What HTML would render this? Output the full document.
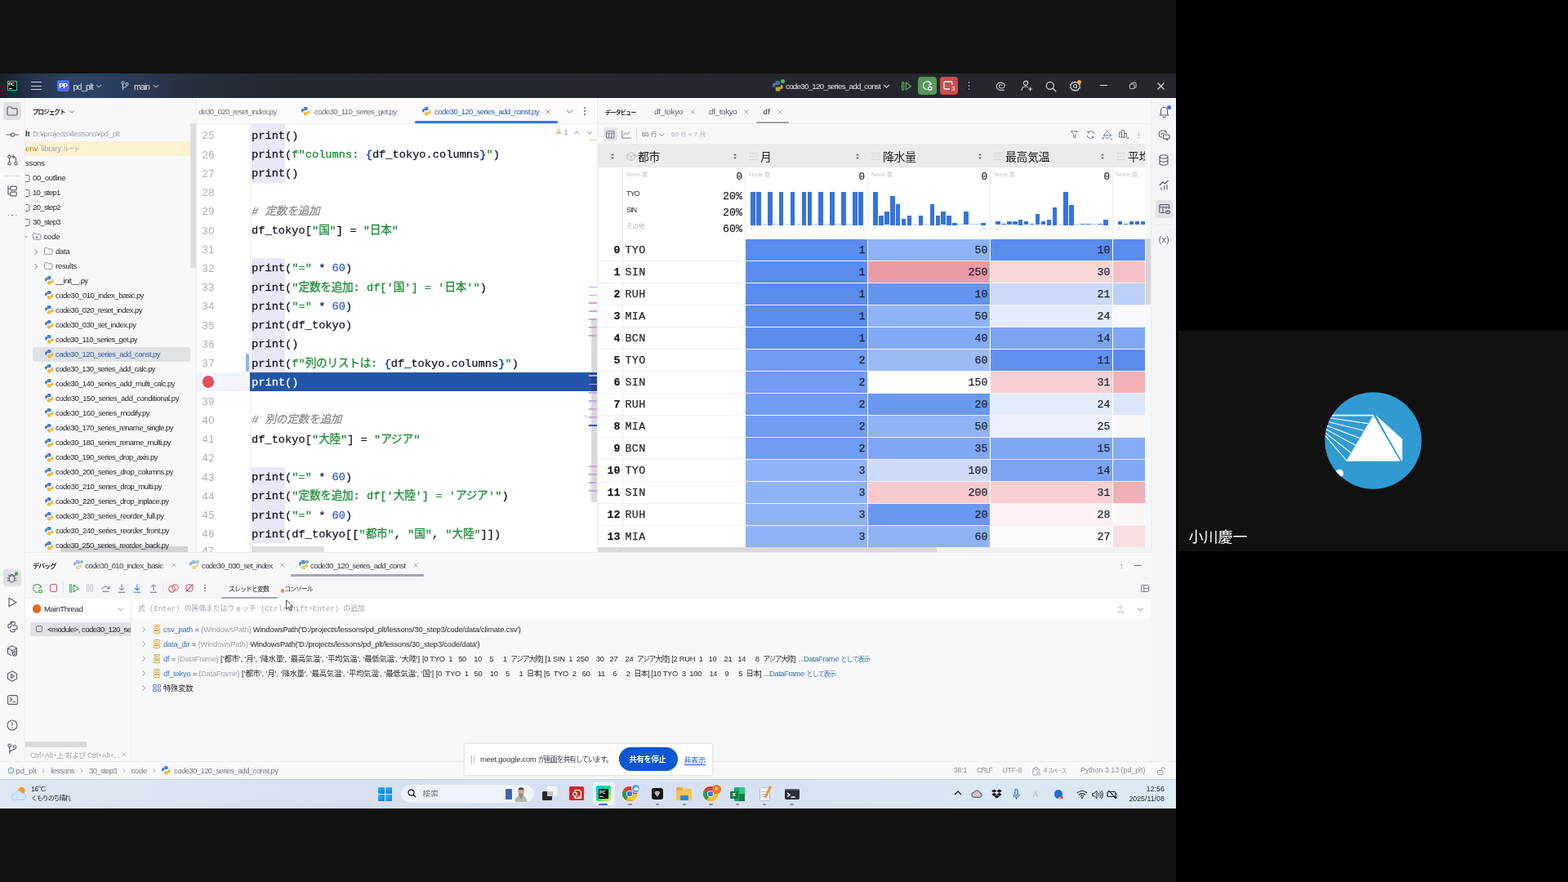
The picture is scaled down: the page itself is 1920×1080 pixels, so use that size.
<!DOCTYPE html>
<html><head><meta charset="utf-8"><title>PyCharm - Meet</title>
<style>
html,body{margin:0;padding:0;background:#000}
body{width:1920px;height:1080px;overflow:hidden;position:relative;font-family:"Liberation Sans","Noto Sans CJK JP",sans-serif}
body div,body span.t,body svg{position:absolute}
.t{white-space:pre;display:block}
.s{font-family:"Liberation Sans","Noto Sans CJK JP",sans-serif}
.m{font-family:"Liberation Mono","Noto Sans CJK JP",monospace}
.r{font-family:"Liberation Serif","Noto Serif CJK SC",serif}
i.j{display:inline-block;white-space:nowrap;font-style:inherit;vertical-align:baseline;letter-spacing:0}
svg{overflow:visible}
</style></head><body>
<div id="R" style="left:0;top:0;width:1920px;height:1080px;will-change:transform">
<div style="left:0px;top:0px;width:1440px;height:1080px;background:#111;"></div>
<div style="left:1443px;top:405px;width:477px;height:270px;background:#111;"></div>
<div style="left:0px;top:120px;width:1440px;height:834px;background:#f7f8fa;"></div>
<div style="left:0px;top:90px;width:1440px;height:30px;background:linear-gradient(90deg,#1b222d 0px,#243450 40px,#2d4266 90px,#2b3d5e 150px,#27303f 230px,#24282f 330px,#24272c 1440px);"></div>
<div style="left:8.5px;top:98.5px;width:12.5px;height:12.5px;background:#0b0b0b;border:1px solid #21d789;box-sizing:border-box;"></div>
<span class="t s b" style="top:100.2px;font-size:5.5px;line-height:6px;color:#fff;left:10.2px;font-weight:700;">PC</span>
<div style="left:10.5px;top:108px;width:4px;height:1px;background:#fff;"></div>
<div style="left:38px;top:100px;width:12.5px;height:1.3px;background:#ced0d6;"></div>
<div style="left:38px;top:104.5px;width:12.5px;height:1.3px;background:#ced0d6;"></div>
<div style="left:38px;top:109px;width:12.5px;height:1.3px;background:#ced0d6;"></div>
<div style="left:70px;top:97.5px;width:14.5px;height:14.5px;background:linear-gradient(135deg,#3f7cf4,#6a5be6);border-radius:3px;"></div>
<span class="t s b" style="top:99.5px;font-size:8.5px;line-height:11px;color:#fff;left:72.2px;letter-spacing:-0.52px;font-weight:700;">PP</span>
<span class="t s" style="top:98.5px;font-size:10.5px;line-height:14px;color:#dfe1e5;left:89.5px;letter-spacing:-0.685px;">pd_plt</span>
<svg style="left:117px;top:102.5px;" width="8" height="5" viewBox="0 0 8 5"><path d="M1 1l3 3 3-3" fill="none" stroke="#9da0a8" stroke-width="1.100"/></svg>
<svg style="left:147.5px;top:98.5px;" width="10" height="12" viewBox="0 0 10 12"><g fill="none" stroke="#ced0d6" stroke-width="1"><circle cx="2.500" cy="2.500" r="1.600"/><circle cx="7.500" cy="4" r="1.600"/><path d="M2.500 4.100V11.500M7.500 5.600c0 2.500-5 1.500-5 4"/></g></svg>
<span class="t s" style="top:98.5px;font-size:10.5px;line-height:14px;color:#dfe1e5;left:164px;letter-spacing:-0.94px;">main</span>
<svg style="left:186.5px;top:102.5px;" width="8" height="5" viewBox="0 0 8 5"><path d="M1 1l3 3 3-3" fill="none" stroke="#9da0a8" stroke-width="1.100"/></svg>
<svg style="left:946.2px;top:99.2px;opacity:0.9" width="12.69" height="12.69" viewBox="2 1 12 14" preserveAspectRatio="none"><path d="M7.9 1C5 1 5.200 2.200 5.200 2.200v1.400h2.800v.4H3.900S2 3.700 2 6.700s1.600 2.900 1.600 2.900h1V8.200s0-1.600 1.600-1.600h2.800s1.500 0 1.500-1.500V2.600S10.800 1 7.900 1z" fill="#4b86bd"/><path d="M8.100 15c2.900 0 2.700-1.200 2.700-1.200v-1.400H8v-.4h4.100s1.900.2 1.900-2.800-1.600-2.900-1.600-2.900h-1v1.400s0 1.600-1.600 1.600H7s-1.500 0-1.500 1.500v2.500S5.200 15 8.100 15z" fill="#d9ad3a"/></svg>
<div style="left:955.5px;top:96.5px;width:5px;height:5px;background:#5fb865;border-radius:50%;"></div>
<span class="t s" style="top:99.0px;font-size:9.8px;line-height:13px;color:#dfe1e5;left:962px;letter-spacing:-0.749px;">code30_120_series_add_const</span>
<svg style="left:1081px;top:102.5px;" width="9" height="5" viewBox="0 0 9 5"><path d="M1 .8l3.500 3.400L8 .8" fill="none" stroke="#ced0d6" stroke-width="1.100"/></svg>
<svg style="left:1104px;top:99.5px;" width="12" height="11" viewBox="0 0 12 11"><g fill="none" stroke="#5fad65" stroke-width="1.200"><rect x=".6" y=".8" width="2.200" height="9.400" rx=".8"/><path d="M5.300 1.100v8.800l6-4.400z" stroke-linejoin="round"/></g></svg>
<div style="left:1124px;top:94px;width:22.5px;height:22px;background:#57965c;border-radius:4px;"></div>
<svg style="left:1128.5px;top:98px;" width="14" height="14" viewBox="0 0 14 14"><g fill="none" stroke="#fff" stroke-width="1.200"><path d="M6.500 11.500A4.800 4.800 0 1 1 11 5.300"/><path d="M8.500 2.300l2.700 2.900-3.300 1"/><circle cx="9.800" cy="10.300" r="2"/><path d="M7 9l1 .6M12.600 9l-1 .6M7 12l1-.6M12.600 12l-1-.6M9.800 8.300V7.300"/></g></svg>
<div style="left:1150.5px;top:94px;width:22px;height:22px;background:#c94f4f;border-radius:4px;"></div>
<svg style="left:1154px;top:98px;" width="16" height="14" viewBox="0 0 16 14"><path d="M9 11H3.500A1.500 1.500 0 0 1 2 9.500v-6A1.500 1.500 0 0 1 3.500 2h7A1.500 1.500 0 0 1 12 3.500V6" fill="none" stroke="#fff" stroke-width="1.300"/></svg>
<span class="t s" style="top:103.5px;font-size:8px;line-height:10px;color:#fff;left:1165px;">3</span>
<div style="left:1185.6px;top:100.1px;width:1.8px;height:1.8px;background:#ced0d6;border-radius:50%;"></div>
<div style="left:1185.6px;top:104.1px;width:1.8px;height:1.8px;background:#ced0d6;border-radius:50%;"></div>
<div style="left:1185.6px;top:108.1px;width:1.8px;height:1.8px;background:#ced0d6;border-radius:50%;"></div>
<svg style="left:1219px;top:98.5px;" width="14" height="13" viewBox="0 0 14 13"><path d="M8.1 5.6 8.0 5.4 7.9 5.2 7.7 5.0 7.4 4.9 7.1 4.7 6.8 4.7 6.5 4.7 6.1 4.7 5.8 4.8 5.4 4.9 5.1 5.1 4.9 5.4 4.6 5.7 4.5 6.0 4.4 6.4 4.4 6.8 4.4 7.1 4.6 7.5 4.9 7.9 5.2 8.2 5.6 8.5 6.1 8.8 6.6 8.9 7.2 9.0 7.8 9.0 8.4 8.9 9.0 8.7 9.6 8.4 10.1 8.1 10.5 7.7 10.8 7.2 11.1 6.6 11.2 6.0 11.2 5.4 11.0 4.8 10.7 4.2 10.3 3.7 9.8 3.2 9.2 2.8 8.5 2.5 7.7 2.2 6.8 2.1 6.0 2.1 5.1 2.3 4.3 2.6 3.5 2.9 2.8 3.4 2.2 4.0 1.7 4.7 1.4 5.5 1.3 6.3 1.3 7.1 1.5 7.9 1.9 8.7 2.4 9.4 3.1 10.1 3.9 10.7 4.9 11.1 5.9 11.4 7.0 11.5 L10.2 11.4" fill="none" stroke="#ced0d6" stroke-width="1.100" stroke-linecap="round" stroke-linejoin="round"/></svg>
<svg style="left:1250px;top:98px;" width="15" height="14" viewBox="0 0 15 14"><g fill="none" stroke="#ced0d6" stroke-width="1.200"><circle cx="6" cy="3.800" r="2.600"/><path d="M1 13c0-3 2-5 5-5 1.200 0 2 .3 2.800.8M11.500 8.500v5M9 11h5"/></g></svg>
<svg style="left:1279.5px;top:98.5px;" width="14" height="14" viewBox="0 0 14 14"><g fill="none" stroke="#ced0d6" stroke-width="1.300"><circle cx="5.800" cy="5.800" r="4.500"/><path d="M9.200 9.200l4 4"/></g></svg>
<svg style="left:1309.5px;top:97.5px;" width="14" height="14" viewBox="0 0 14 14"><g fill="none" stroke="#ced0d6" stroke-width="1.200"><circle cx="6.500" cy="7.500" r="2"/><path d="M6.500 2l1.500 1.300 2-.3.700 1.900 1.800 1-.7 1.900.7 1.900-1.800 1-.7 1.900-2-.3L6.500 13.500 5 12.200l-2 .3-.7-1.900-1.800-1 .7-1.900-.7-1.900 1.800-1L3 2.900l2 .4z" stroke-linejoin="round"/></g></svg>
<div style="left:1318.8px;top:97.7px;width:5px;height:5px;background:#f5a623;border-radius:50%;"></div>
<div style="left:1347px;top:103.8px;width:8.5px;height:1px;background:#dfe1e5;"></div>
<svg style="left:1382.5px;top:101px;" width="8.5" height="8.5" viewBox="0 0 10 10"><g fill="none" stroke="#dfe1e5" stroke-width="1"><rect x=".5" y="2.500" width="6.500" height="6.500" rx="1"/><path d="M2.500 2.300V1.500a1 1 0 0 1 1-1H8.500a1 1 0 0 1 1 1V6.500a1 1 0 0 1-1 1H7.200"/></g></svg>
<svg style="left:1417px;top:100.5px;" width="9" height="9" viewBox="0 0 9 9"><path d="M.5.500l8 8M8.500.5l-8 8" stroke="#dfe1e5" stroke-width="1.100"/></svg>
<div style="left:30px;top:120px;width:1px;height:812px;background:#ebecf0;"></div>
<div style="left:4px;top:125px;width:22px;height:22px;background:#dfe1e5;border-radius:4px;"></div>
<svg style="left:8px;top:129.5px;" width="14" height="12" viewBox="0 0 14 12"><path d="M1 2.500A1.500 1.500 0 0 1 2.500 1h3l1.500 1.800h4.500A1.500 1.500 0 0 1 13 4.300v5.200A1.500 1.500 0 0 1 11.500 11h-9A1.500 1.500 0 0 1 1 9.500z" fill="none" stroke="#5a5d6b" stroke-width="1.200"/></svg>
<svg style="left:7.5px;top:162px;" width="15" height="6" viewBox="0 0 15 6"><g fill="none" stroke="#5a5d6b" stroke-width="1.100"><circle cx="7.500" cy="3" r="2.200"/><path d="M0 3h5.300M9.700 3H15"/></g></svg>
<svg style="left:8.5px;top:189px;" width="13" height="14" viewBox="0 0 13 14"><g fill="none" stroke="#5a5d6b" stroke-width="1.100"><circle cx="2.500" cy="2.800" r="1.700"/><circle cx="2.500" cy="11.200" r="1.700"/><circle cx="10.500" cy="11.200" r="1.700"/><path d="M2.500 4.500v5M10.500 9.500V5.500A2.500 2.500 0 0 0 8 3H6.500M8 1L6 3l2 2"/></g></svg>
<div style="left:6px;top:214.5px;width:18px;height:1px;background:#dfe1e5;"></div>
<svg style="left:9px;top:227px;" width="12" height="14" viewBox="0 0 12 14"><g fill="none" stroke="#5a5d6b" stroke-width="1.200"><path d="M1 .5v10.500h2.500M1 4h2.500"/><rect x="3.800" y="1.200" width="7.400" height="4.600" rx="1"/><rect x="3.800" y="8.200" width="7.400" height="4.600" rx="1"/></g></svg>
<div style="left:9.5px;top:262.5px;width:1.8px;height:1.8px;background:#5a5d6b;border-radius:50%;"></div>
<div style="left:14px;top:262.5px;width:1.8px;height:1.8px;background:#5a5d6b;border-radius:50%;"></div>
<div style="left:18.5px;top:262.5px;width:1.8px;height:1.8px;background:#5a5d6b;border-radius:50%;"></div>
<span class="t s b" style="top:129.5px;font-size:9.8px;line-height:13px;color:#27282e;left:40px;font-weight:700;"><i class=j style="width:39.4px;font-size:7.6px;letter-spacing:-1px">プロジェクト</i></span>
<svg style="left:84px;top:134px;" width="8" height="5" viewBox="0 0 8 5"><path d="M1 1l3 3 3-3" fill="none" stroke="#818594" stroke-width="1"/></svg>
<div style="left:31px;top:173px;width:202px;height:17.5px;background:#fdf2d0;"></div>
<span class="t s b" style="top:158.0px;font-size:9.5px;line-height:12px;color:#27282e;left:31px;letter-spacing:-0.152px;font-weight:700;">lt</span>
<span class="t s" style="top:158.0px;font-size:9.5px;line-height:12px;color:#a1a4ad;left:40px;letter-spacing:-0.393px;">D:¥projects¥lessons¥pd_plt</span>
<span class="t s" style="top:176.0px;font-size:9.5px;line-height:12px;color:#b8862b;left:31px;letter-spacing:0.061px;">env</span>
<span class="t s" style="top:176.0px;font-size:9.5px;line-height:12px;color:#a1a4ad;left:50.5px;letter-spacing:-0.244px;">library <i class=j style="width:19.95px;font-size:7.6px;letter-spacing:-1px">ルート</i></span>
<span class="t s" style="top:194.0px;font-size:9.5px;line-height:12px;color:#27282e;left:31px;letter-spacing:-0.263px;">ssons</span>
<svg style="left:31px;top:213.5px;" width="6" height="9" viewBox="0 0 6 9"><path d="M0 .5h3.500A1.500 1.500 0 0 1 5 2v5A1.500 1.500 0 0 1 3.500 8.500H0" fill="none" stroke="#6c707e" stroke-width="1"/></svg>
<span class="t s" style="top:212.0px;font-size:9.5px;line-height:12px;color:#27282e;left:40px;letter-spacing:-0.335px;">00_outline</span>
<svg style="left:31px;top:231.5px;" width="6" height="9" viewBox="0 0 6 9"><path d="M0 .5h3.500A1.500 1.500 0 0 1 5 2v5A1.500 1.500 0 0 1 3.500 8.500H0" fill="none" stroke="#6c707e" stroke-width="1"/></svg>
<span class="t s" style="top:230.0px;font-size:9.5px;line-height:12px;color:#27282e;left:40px;letter-spacing:-0.699px;">10_step1</span>
<svg style="left:31px;top:249.5px;" width="6" height="9" viewBox="0 0 6 9"><path d="M0 .5h3.500A1.500 1.500 0 0 1 5 2v5A1.500 1.500 0 0 1 3.500 8.500H0" fill="none" stroke="#6c707e" stroke-width="1"/></svg>
<span class="t s" style="top:248.0px;font-size:9.5px;line-height:12px;color:#27282e;left:40px;letter-spacing:-0.636px;">20_step2</span>
<svg style="left:31px;top:267.5px;" width="6" height="9" viewBox="0 0 6 9"><path d="M0 .5h3.500A1.500 1.500 0 0 1 5 2v5A1.500 1.500 0 0 1 3.500 8.500H0" fill="none" stroke="#6c707e" stroke-width="1"/></svg>
<span class="t s" style="top:266.0px;font-size:9.5px;line-height:12px;color:#27282e;left:40px;letter-spacing:-0.636px;">30_step3</span>
<svg style="left:31px;top:288px;" width="4" height="4" viewBox="0 0 4 4"><path d="M0 .5l2 2.500" stroke="#6c707e" fill="none"/></svg>
<svg style="left:40.3px;top:285.4px;" width="10.5" height="8.8" viewBox="0 0 12 10"><path d="M.6 1.800A1.200 1.200 0 0 1 1.800.6h2.700l1.200 1.500h4.500A1.200 1.200 0 0 1 11.400 3.300v5A1.200 1.200 0 0 1 10.200 9.500H1.800A1.200 1.200 0 0 1 .6 8.300z" fill="none" stroke="#858997" stroke-width="1"/></svg>
<div style="left:43.8px;top:289.2px;width:2.5px;height:2.5px;background:none;border:0.8px solid #858997;border-radius:50%;box-sizing:border-box;"></div>
<span class="t s" style="top:284.0px;font-size:9.5px;line-height:12px;color:#27282e;left:53.5px;letter-spacing:-0.15px;">code</span>
<svg style="left:42px;top:304.5px;" width="4.5" height="7" viewBox="0 0 4.500 7"><path d="M.7.500l3 3-3 3" stroke="#6c707e" fill="none" stroke-width="1"/></svg>
<svg style="left:54.3px;top:303.4px;" width="10.5" height="8.8" viewBox="0 0 12 10"><path d="M.6 1.800A1.200 1.200 0 0 1 1.800.6h2.700l1.200 1.500h4.500A1.200 1.200 0 0 1 11.400 3.300v5A1.200 1.200 0 0 1 10.200 9.500H1.800A1.200 1.200 0 0 1 .6 8.300z" fill="none" stroke="#858997" stroke-width="1"/></svg>
<span class="t s" style="top:302.0px;font-size:9.5px;line-height:12px;color:#27282e;left:68px;letter-spacing:-0.247px;">data</span>
<svg style="left:42px;top:322.5px;" width="4.5" height="7" viewBox="0 0 4.500 7"><path d="M.7.500l3 3-3 3" stroke="#6c707e" fill="none" stroke-width="1"/></svg>
<svg style="left:54.3px;top:321.4px;" width="10.5" height="8.8" viewBox="0 0 12 10"><path d="M.6 1.800A1.200 1.200 0 0 1 1.800.6h2.700l1.200 1.500h4.500A1.200 1.200 0 0 1 11.400 3.300v5A1.200 1.200 0 0 1 10.200 9.500H1.800A1.200 1.200 0 0 1 .6 8.300z" fill="none" stroke="#858997" stroke-width="1"/></svg>
<span class="t s" style="top:320.0px;font-size:9.5px;line-height:12px;color:#27282e;left:68px;letter-spacing:-0.283px;">results</span>
<div style="left:40px;top:425px;width:192.5px;height:18px;background:#dfe1e5;border-radius:3px;"></div>
<svg style="left:55.0px;top:338.4px;opacity:1" width="10.5" height="10.5" viewBox="2 1 12 14" preserveAspectRatio="none"><path d="M7.9 1C5 1 5.200 2.200 5.200 2.200v1.400h2.800v.4H3.900S2 3.700 2 6.700s1.600 2.900 1.600 2.900h1V8.200s0-1.600 1.600-1.600h2.800s1.500 0 1.500-1.500V2.600S10.800 1 7.900 1z" fill="#3b7bd0"/><path d="M8.100 15c2.900 0 2.700-1.200 2.700-1.200v-1.400H8v-.4h4.100s1.900.2 1.900-2.800-1.600-2.900-1.600-2.900h-1v1.400s0 1.600-1.600 1.600H7s-1.500 0-1.500 1.500v2.500S5.200 15 8.100 15z" fill="#f4b830"/></svg>
<span class="t s" style="top:338.0px;font-size:9.5px;line-height:12px;color:#27282e;left:68px;letter-spacing:-0.586px;">__init__.py</span>
<svg style="left:55.0px;top:356.4px;opacity:1" width="10.5" height="10.5" viewBox="2 1 12 14" preserveAspectRatio="none"><path d="M7.9 1C5 1 5.200 2.200 5.200 2.200v1.400h2.800v.4H3.900S2 3.700 2 6.700s1.600 2.900 1.600 2.900h1V8.200s0-1.600 1.600-1.600h2.800s1.500 0 1.500-1.500V2.600S10.800 1 7.900 1z" fill="#3b7bd0"/><path d="M8.100 15c2.900 0 2.700-1.200 2.700-1.200v-1.400H8v-.4h4.100s1.900.2 1.900-2.800-1.600-2.900-1.600-2.900h-1v1.400s0 1.600-1.600 1.600H7s-1.500 0-1.500 1.500v2.500S5.200 15 8.100 15z" fill="#f4b830"/></svg>
<span class="t s" style="top:356.0px;font-size:9.5px;line-height:12px;color:#27282e;left:68px;letter-spacing:-0.497px;">code30_010_index_basic.py</span>
<svg style="left:55.0px;top:374.4px;opacity:1" width="10.5" height="10.5" viewBox="2 1 12 14" preserveAspectRatio="none"><path d="M7.9 1C5 1 5.200 2.200 5.200 2.200v1.400h2.800v.4H3.900S2 3.700 2 6.700s1.600 2.900 1.600 2.900h1V8.200s0-1.600 1.600-1.600h2.800s1.500 0 1.500-1.500V2.600S10.800 1 7.900 1z" fill="#3b7bd0"/><path d="M8.100 15c2.900 0 2.700-1.200 2.700-1.200v-1.400H8v-.4h4.100s1.900.2 1.900-2.800-1.600-2.900-1.600-2.900h-1v1.400s0 1.600-1.600 1.600H7s-1.500 0-1.500 1.500v2.500S5.200 15 8.100 15z" fill="#f4b830"/></svg>
<span class="t s" style="top:374.0px;font-size:9.5px;line-height:12px;color:#27282e;left:68px;letter-spacing:-0.535px;">code30_020_reset_index.py</span>
<svg style="left:55.0px;top:392.4px;opacity:1" width="10.5" height="10.5" viewBox="2 1 12 14" preserveAspectRatio="none"><path d="M7.9 1C5 1 5.200 2.200 5.200 2.200v1.400h2.800v.4H3.900S2 3.700 2 6.700s1.600 2.900 1.600 2.900h1V8.200s0-1.600 1.600-1.600h2.800s1.500 0 1.500-1.500V2.600S10.800 1 7.900 1z" fill="#3b7bd0"/><path d="M8.100 15c2.900 0 2.700-1.200 2.700-1.200v-1.400H8v-.4h4.100s1.900.2 1.900-2.800-1.600-2.900-1.600-2.900h-1v1.400s0 1.600-1.600 1.600H7s-1.500 0-1.500 1.500v2.500S5.200 15 8.100 15z" fill="#f4b830"/></svg>
<span class="t s" style="top:392.0px;font-size:9.5px;line-height:12px;color:#27282e;left:68px;letter-spacing:-0.54px;">code30_030_set_index.py</span>
<svg style="left:55.0px;top:410.4px;opacity:1" width="10.5" height="10.5" viewBox="2 1 12 14" preserveAspectRatio="none"><path d="M7.9 1C5 1 5.200 2.200 5.200 2.200v1.400h2.800v.4H3.900S2 3.700 2 6.700s1.600 2.900 1.600 2.900h1V8.200s0-1.600 1.600-1.600h2.800s1.500 0 1.500-1.500V2.600S10.800 1 7.900 1z" fill="#3b7bd0"/><path d="M8.100 15c2.900 0 2.700-1.200 2.700-1.200v-1.400H8v-.4h4.100s1.900.2 1.900-2.800-1.600-2.900-1.600-2.900h-1v1.400s0 1.600-1.600 1.600H7s-1.500 0-1.500 1.500v2.500S5.200 15 8.100 15z" fill="#f4b830"/></svg>
<span class="t s" style="top:410.0px;font-size:9.5px;line-height:12px;color:#27282e;left:68px;letter-spacing:-0.558px;">code30_110_series_get.py</span>
<svg style="left:55.0px;top:428.4px;opacity:1" width="10.5" height="10.5" viewBox="2 1 12 14" preserveAspectRatio="none"><path d="M7.9 1C5 1 5.200 2.200 5.200 2.200v1.400h2.800v.4H3.900S2 3.700 2 6.700s1.600 2.900 1.600 2.900h1V8.200s0-1.600 1.600-1.600h2.800s1.500 0 1.500-1.500V2.600S10.800 1 7.900 1z" fill="#3b7bd0"/><path d="M8.100 15c2.900 0 2.700-1.200 2.700-1.200v-1.400H8v-.4h4.100s1.900.2 1.900-2.800-1.600-2.900-1.600-2.900h-1v1.400s0 1.600-1.600 1.600H7s-1.500 0-1.500 1.500v2.500S5.200 15 8.100 15z" fill="#f4b830"/></svg>
<span class="t s" style="top:428.0px;font-size:9.5px;line-height:12px;color:#2f5fa8;left:68px;letter-spacing:-0.557px;">code30_120_series_add_const.py</span>
<svg style="left:55.0px;top:446.4px;opacity:1" width="10.5" height="10.5" viewBox="2 1 12 14" preserveAspectRatio="none"><path d="M7.9 1C5 1 5.200 2.200 5.200 2.200v1.400h2.800v.4H3.900S2 3.700 2 6.700s1.600 2.900 1.600 2.900h1V8.200s0-1.600 1.600-1.600h2.800s1.500 0 1.500-1.500V2.600S10.800 1 7.900 1z" fill="#3b7bd0"/><path d="M8.100 15c2.900 0 2.700-1.200 2.700-1.200v-1.400H8v-.4h4.100s1.900.2 1.900-2.800-1.600-2.900-1.600-2.900h-1v1.400s0 1.600-1.600 1.600H7s-1.500 0-1.500 1.500v2.500S5.200 15 8.100 15z" fill="#f4b830"/></svg>
<span class="t s" style="top:446.0px;font-size:9.5px;line-height:12px;color:#27282e;left:68px;letter-spacing:-0.583px;">code30_130_series_add_calc.py</span>
<svg style="left:55.0px;top:464.4px;opacity:1" width="10.5" height="10.5" viewBox="2 1 12 14" preserveAspectRatio="none"><path d="M7.9 1C5 1 5.200 2.200 5.200 2.200v1.400h2.800v.4H3.900S2 3.700 2 6.700s1.600 2.900 1.600 2.900h1V8.200s0-1.600 1.600-1.600h2.800s1.500 0 1.500-1.500V2.600S10.800 1 7.900 1z" fill="#3b7bd0"/><path d="M8.100 15c2.900 0 2.700-1.200 2.700-1.200v-1.400H8v-.4h4.100s1.900.2 1.900-2.800-1.600-2.900-1.600-2.900h-1v1.400s0 1.600-1.600 1.600H7s-1.500 0-1.500 1.500v2.500S5.200 15 8.100 15z" fill="#f4b830"/></svg>
<span class="t s" style="top:464.0px;font-size:9.5px;line-height:12px;color:#27282e;left:68px;letter-spacing:-0.521px;">code30_140_series_add_multi_calc.py</span>
<svg style="left:55.0px;top:482.4px;opacity:1" width="10.5" height="10.5" viewBox="2 1 12 14" preserveAspectRatio="none"><path d="M7.9 1C5 1 5.200 2.200 5.200 2.200v1.400h2.800v.4H3.900S2 3.700 2 6.700s1.600 2.900 1.600 2.900h1V8.200s0-1.600 1.600-1.600h2.800s1.500 0 1.500-1.500V2.600S10.800 1 7.900 1z" fill="#3b7bd0"/><path d="M8.100 15c2.900 0 2.700-1.200 2.700-1.200v-1.400H8v-.4h4.100s1.900.2 1.900-2.800-1.600-2.900-1.600-2.900h-1v1.400s0 1.600-1.600 1.600H7s-1.500 0-1.500 1.500v2.500S5.200 15 8.100 15z" fill="#f4b830"/></svg>
<span class="t s" style="top:482.0px;font-size:9.5px;line-height:12px;color:#27282e;left:68px;letter-spacing:-0.457px;">code30_150_series_add_conditional.py</span>
<svg style="left:55.0px;top:500.4px;opacity:1" width="10.5" height="10.5" viewBox="2 1 12 14" preserveAspectRatio="none"><path d="M7.9 1C5 1 5.200 2.200 5.200 2.200v1.400h2.800v.4H3.900S2 3.700 2 6.700s1.600 2.900 1.600 2.900h1V8.200s0-1.600 1.600-1.600h2.800s1.500 0 1.500-1.500V2.600S10.800 1 7.900 1z" fill="#3b7bd0"/><path d="M8.100 15c2.900 0 2.700-1.200 2.700-1.200v-1.400H8v-.4h4.100s1.900.2 1.900-2.800-1.600-2.900-1.600-2.900h-1v1.400s0 1.600-1.600 1.600H7s-1.500 0-1.500 1.500v2.500S5.200 15 8.100 15z" fill="#f4b830"/></svg>
<span class="t s" style="top:500.0px;font-size:9.5px;line-height:12px;color:#27282e;left:68px;letter-spacing:-0.487px;">code30_160_series_modify.py</span>
<svg style="left:55.0px;top:518.5px;opacity:1" width="10.5" height="10.5" viewBox="2 1 12 14" preserveAspectRatio="none"><path d="M7.9 1C5 1 5.200 2.200 5.200 2.200v1.400h2.800v.4H3.900S2 3.700 2 6.700s1.600 2.900 1.600 2.900h1V8.200s0-1.600 1.600-1.600h2.800s1.500 0 1.500-1.500V2.600S10.800 1 7.900 1z" fill="#3b7bd0"/><path d="M8.100 15c2.900 0 2.700-1.200 2.700-1.200v-1.400H8v-.4h4.100s1.900.2 1.900-2.800-1.600-2.900-1.600-2.900h-1v1.400s0 1.600-1.600 1.600H7s-1.500 0-1.500 1.500v2.500S5.200 15 8.100 15z" fill="#f4b830"/></svg>
<span class="t s" style="top:518.0px;font-size:9.5px;line-height:12px;color:#27282e;left:68px;letter-spacing:-0.565px;">code30_170_series_rename_single.py</span>
<svg style="left:55.0px;top:536.5px;opacity:1" width="10.5" height="10.5" viewBox="2 1 12 14" preserveAspectRatio="none"><path d="M7.9 1C5 1 5.200 2.200 5.200 2.200v1.400h2.800v.4H3.900S2 3.700 2 6.700s1.600 2.900 1.600 2.900h1V8.200s0-1.600 1.600-1.600h2.800s1.500 0 1.500-1.500V2.600S10.800 1 7.900 1z" fill="#3b7bd0"/><path d="M8.100 15c2.900 0 2.700-1.200 2.700-1.200v-1.400H8v-.4h4.100s1.900.2 1.900-2.800-1.600-2.900-1.600-2.900h-1v1.400s0 1.600-1.600 1.600H7s-1.500 0-1.500 1.500v2.500S5.200 15 8.100 15z" fill="#f4b830"/></svg>
<span class="t s" style="top:536.0px;font-size:9.5px;line-height:12px;color:#27282e;left:68px;letter-spacing:-0.528px;">code30_180_series_rename_multi.py</span>
<svg style="left:55.0px;top:554.5px;opacity:1" width="10.5" height="10.5" viewBox="2 1 12 14" preserveAspectRatio="none"><path d="M7.9 1C5 1 5.200 2.200 5.200 2.200v1.400h2.800v.4H3.900S2 3.700 2 6.700s1.600 2.900 1.600 2.900h1V8.200s0-1.600 1.600-1.600h2.800s1.500 0 1.500-1.500V2.600S10.800 1 7.900 1z" fill="#3b7bd0"/><path d="M8.100 15c2.900 0 2.700-1.200 2.700-1.200v-1.400H8v-.4h4.100s1.900.2 1.900-2.800-1.600-2.900-1.600-2.900h-1v1.400s0 1.600-1.600 1.600H7s-1.500 0-1.500 1.500v2.500S5.200 15 8.100 15z" fill="#f4b830"/></svg>
<span class="t s" style="top:554.0px;font-size:9.5px;line-height:12px;color:#27282e;left:68px;letter-spacing:-0.569px;">code30_190_series_drop_axis.py</span>
<svg style="left:55.0px;top:572.5px;opacity:1" width="10.5" height="10.5" viewBox="2 1 12 14" preserveAspectRatio="none"><path d="M7.9 1C5 1 5.200 2.200 5.200 2.200v1.400h2.800v.4H3.900S2 3.700 2 6.700s1.600 2.900 1.600 2.900h1V8.200s0-1.600 1.600-1.600h2.800s1.500 0 1.500-1.500V2.600S10.800 1 7.900 1z" fill="#3b7bd0"/><path d="M8.100 15c2.900 0 2.700-1.200 2.700-1.200v-1.400H8v-.4h4.100s1.900.2 1.900-2.800-1.600-2.900-1.600-2.900h-1v1.400s0 1.600-1.600 1.600H7s-1.500 0-1.500 1.500v2.500S5.200 15 8.100 15z" fill="#f4b830"/></svg>
<span class="t s" style="top:572.0px;font-size:9.5px;line-height:12px;color:#27282e;left:68px;letter-spacing:-0.502px;">code30_200_series_drop_columns.py</span>
<svg style="left:55.0px;top:590.5px;opacity:1" width="10.5" height="10.5" viewBox="2 1 12 14" preserveAspectRatio="none"><path d="M7.9 1C5 1 5.200 2.200 5.200 2.200v1.400h2.800v.4H3.900S2 3.700 2 6.700s1.600 2.900 1.600 2.900h1V8.200s0-1.600 1.600-1.600h2.800s1.500 0 1.500-1.500V2.600S10.800 1 7.900 1z" fill="#3b7bd0"/><path d="M8.100 15c2.900 0 2.700-1.200 2.700-1.200v-1.400H8v-.4h4.100s1.900.2 1.900-2.800-1.600-2.900-1.600-2.900h-1v1.400s0 1.600-1.600 1.600H7s-1.500 0-1.500 1.500v2.500S5.200 15 8.100 15z" fill="#f4b830"/></svg>
<span class="t s" style="top:590.0px;font-size:9.5px;line-height:12px;color:#27282e;left:68px;letter-spacing:-0.492px;">code30_210_series_drop_multi.py</span>
<svg style="left:55.0px;top:608.5px;opacity:1" width="10.5" height="10.5" viewBox="2 1 12 14" preserveAspectRatio="none"><path d="M7.9 1C5 1 5.200 2.200 5.200 2.200v1.400h2.800v.4H3.900S2 3.700 2 6.700s1.600 2.900 1.600 2.900h1V8.200s0-1.600 1.600-1.600h2.800s1.500 0 1.500-1.500V2.600S10.800 1 7.900 1z" fill="#3b7bd0"/><path d="M8.100 15c2.900 0 2.700-1.200 2.700-1.200v-1.400H8v-.4h4.100s1.900.2 1.900-2.800-1.600-2.900-1.600-2.900h-1v1.400s0 1.600-1.600 1.600H7s-1.500 0-1.500 1.500v2.500S5.200 15 8.100 15z" fill="#f4b830"/></svg>
<span class="t s" style="top:608.0px;font-size:9.5px;line-height:12px;color:#27282e;left:68px;letter-spacing:-0.509px;">code30_220_series_drop_inplace.py</span>
<svg style="left:55.0px;top:626.5px;opacity:1" width="10.5" height="10.5" viewBox="2 1 12 14" preserveAspectRatio="none"><path d="M7.9 1C5 1 5.200 2.200 5.200 2.200v1.400h2.800v.4H3.900S2 3.700 2 6.700s1.600 2.900 1.600 2.900h1V8.200s0-1.600 1.600-1.600h2.800s1.500 0 1.500-1.500V2.600S10.800 1 7.900 1z" fill="#3b7bd0"/><path d="M8.100 15c2.900 0 2.700-1.200 2.700-1.200v-1.400H8v-.4h4.100s1.900.2 1.900-2.800-1.600-2.900-1.600-2.900h-1v1.400s0 1.600-1.600 1.600H7s-1.500 0-1.500 1.500v2.500S5.200 15 8.100 15z" fill="#f4b830"/></svg>
<span class="t s" style="top:626.0px;font-size:9.5px;line-height:12px;color:#27282e;left:68px;letter-spacing:-0.498px;">code30_230_series_reorder_full.py</span>
<svg style="left:55.0px;top:644.5px;opacity:1" width="10.5" height="10.5" viewBox="2 1 12 14" preserveAspectRatio="none"><path d="M7.9 1C5 1 5.200 2.200 5.200 2.200v1.400h2.800v.4H3.900S2 3.700 2 6.700s1.600 2.900 1.600 2.900h1V8.200s0-1.600 1.600-1.600h2.800s1.500 0 1.500-1.500V2.600S10.800 1 7.900 1z" fill="#3b7bd0"/><path d="M8.100 15c2.900 0 2.700-1.200 2.700-1.200v-1.400H8v-.4h4.100s1.900.2 1.900-2.800-1.600-2.900-1.600-2.900h-1v1.400s0 1.600-1.600 1.600H7s-1.500 0-1.500 1.500v2.500S5.200 15 8.100 15z" fill="#f4b830"/></svg>
<span class="t s" style="top:644.0px;font-size:9.5px;line-height:12px;color:#27282e;left:68px;letter-spacing:-0.494px;">code30_240_series_reorder_front.py</span>
<svg style="left:55.0px;top:662.5px;opacity:1" width="10.5" height="10.5" viewBox="2 1 12 14" preserveAspectRatio="none"><path d="M7.9 1C5 1 5.200 2.200 5.200 2.200v1.400h2.800v.4H3.900S2 3.700 2 6.700s1.600 2.900 1.600 2.900h1V8.200s0-1.600 1.600-1.600h2.800s1.500 0 1.500-1.500V2.600S10.800 1 7.900 1z" fill="#3b7bd0"/><path d="M8.100 15c2.900 0 2.700-1.200 2.700-1.200v-1.400H8v-.4h4.100s1.900.2 1.900-2.800-1.600-2.900-1.600-2.900h-1v1.400s0 1.600-1.600 1.600H7s-1.500 0-1.500 1.500v2.500S5.200 15 8.100 15z" fill="#f4b830"/></svg>
<span class="t s" style="top:662.0px;font-size:9.5px;line-height:12px;color:#27282e;left:68px;letter-spacing:-0.556px;">code30_250_series_reorder_back.py</span>
<div style="left:233px;top:151px;width:6.5px;height:177px;background:#dcdde1;"></div>
<div style="left:74px;top:668.8px;width:156px;height:7.2px;background:rgba(60,62,70,.2);"></div>
<div style="left:240px;top:120px;width:1px;height:557px;background:#ebecf0;"></div>
<div style="left:241px;top:120px;width:490px;height:32px;background:#fcfcfd;"></div>
<div style="left:241px;top:151px;width:490px;height:1px;background:#ebecf0;"></div>
<div style="left:241px;top:152px;width:490px;height:524px;background:#fff;"></div>
<span class="t s" style="top:130.0px;font-size:9.8px;line-height:13px;color:#6c707e;left:243px;letter-spacing:-0.752px;">de30_020_reset_index.py</span>
<svg style="left:369.2px;top:130.8px;opacity:1" width="10.5" height="10.5" viewBox="2 1 12 14" preserveAspectRatio="none"><path d="M7.9 1C5 1 5.200 2.200 5.200 2.200v1.400h2.800v.4H3.900S2 3.700 2 6.700s1.600 2.900 1.600 2.900h1V8.200s0-1.600 1.600-1.600h2.800s1.500 0 1.500-1.500V2.600S10.800 1 7.900 1z" fill="#3b7bd0"/><path d="M8.100 15c2.900 0 2.700-1.200 2.700-1.200v-1.400H8v-.4h4.100s1.900.2 1.900-2.800-1.600-2.900-1.600-2.900h-1v1.400s0 1.600-1.600 1.600H7s-1.500 0-1.500 1.500v2.500S5.200 15 8.100 15z" fill="#f4b830"/></svg>
<span class="t s" style="top:130.0px;font-size:9.8px;line-height:13px;color:#6c707e;left:385px;letter-spacing:-0.686px;">code30_110_series_get.py</span>
<svg style="left:516.8px;top:130.8px;opacity:1" width="10.5" height="10.5" viewBox="2 1 12 14" preserveAspectRatio="none"><path d="M7.9 1C5 1 5.200 2.200 5.200 2.200v1.400h2.800v.4H3.900S2 3.700 2 6.700s1.600 2.900 1.600 2.900h1V8.200s0-1.600 1.600-1.600h2.800s1.500 0 1.500-1.500V2.600S10.800 1 7.900 1z" fill="#3b7bd0"/><path d="M8.100 15c2.900 0 2.700-1.200 2.700-1.200v-1.400H8v-.4h4.100s1.900.2 1.900-2.800-1.600-2.900-1.600-2.900h-1v1.400s0 1.600-1.600 1.600H7s-1.500 0-1.500 1.500v2.500S5.200 15 8.100 15z" fill="#f4b830"/></svg>
<span class="t s" style="top:130.0px;font-size:9.8px;line-height:13px;color:#2f5fa8;left:532px;letter-spacing:-0.71px;">code30_120_series_add_const.py</span>
<svg style="left:668px;top:133.5px;" width="6" height="6" viewBox="0 0 6 6"><path d="M.5.500l5 5M5.500.5l-5 5" stroke="#818594" stroke-width=".9"/></svg>
<div style="left:508px;top:148px;width:174.5px;height:3px;background:#3574f0;border-radius:1.500px;"></div>
<svg style="left:693px;top:134px;" width="9" height="5" viewBox="0 0 9 5"><path d="M.8.800l3.700 3.400L8.200.8" fill="none" stroke="#6c707e" stroke-width="1"/></svg>
<div style="left:715.3px;top:131.2px;width:1.5px;height:1.5px;background:#6c707e;border-radius:50%;"></div>
<div style="left:715.3px;top:135.2px;width:1.5px;height:1.5px;background:#6c707e;border-radius:50%;"></div>
<div style="left:715.3px;top:139.2px;width:1.5px;height:1.5px;background:#6c707e;border-radius:50%;"></div>
<div style="left:305.5px;top:152px;width:1px;height:524px;background:#ebecf0;"></div>
<svg style="left:680px;top:157px;" width="8" height="7.5" viewBox="0 0 8 7.500"><path d="M4 .4L7.700 7H.3z" fill="#d9c38a"/><path d="M4 2.800v2.200M4 5.700v.6" stroke="#fff" stroke-width=".8"/></svg>
<span class="t s" style="top:156.5px;font-size:8.5px;line-height:11px;color:#9094a0;left:690.5px;">1</span>
<svg style="left:702px;top:159.5px;" width="8" height="5" viewBox="0 0 8 5"><path d="M1 4l3-3 3 3" fill="none" stroke="#9094a0" stroke-width="1"/></svg>
<svg style="left:718px;top:159.5px;" width="8" height="5" viewBox="0 0 8 5"><path d="M1 1l3 3 3-3" fill="none" stroke="#9094a0" stroke-width="1"/></svg>
<div style="left:721px;top:171px;width:10px;height:1px;background:#d8d48a;"></div>
<div style="left:241px;top:456.1px;width:64.5px;height:22.639999999999997px;background:#f2f5fb;"></div>
<div style="left:306px;top:456.1px;width:425px;height:22.639999999999997px;background:#2255a8;"></div>
<div style="left:307.5px;top:152px;width:41.2px;height:25.42px;background:#e8e8f8;"></div>
<div style="left:307.5px;top:176.62px;width:41.2px;height:24.04px;background:#e8e8f8;"></div>
<div style="left:307.5px;top:199.86px;width:41.2px;height:24.04px;background:#e8e8f8;"></div>
<div style="left:307.5px;top:316.06px;width:41.2px;height:24.04px;background:#e8e8f8;"></div>
<div style="left:307.5px;top:339.3px;width:41.2px;height:24.04px;background:#e8e8f8;"></div>
<div style="left:307.5px;top:362.54px;width:41.2px;height:24.04px;background:#e8e8f8;"></div>
<div style="left:307.5px;top:385.78px;width:41.2px;height:24.04px;background:#e8e8f8;"></div>
<div style="left:307.5px;top:409.02px;width:41.2px;height:24.04px;background:#e8e8f8;"></div>
<div style="left:307.5px;top:432.26px;width:41.2px;height:24.04px;background:#e8e8f8;"></div>
<div style="left:307.5px;top:571.7px;width:41.2px;height:24.04px;background:#e8e8f8;"></div>
<div style="left:307.5px;top:594.94px;width:41.2px;height:24.04px;background:#e8e8f8;"></div>
<div style="left:307.5px;top:618.18px;width:41.2px;height:24.04px;background:#e8e8f8;"></div>
<div style="left:307.5px;top:641.42px;width:41.2px;height:24.04px;background:#e8e8f8;"></div>
<span class="t s" style="top:157.3px;font-size:12.8px;line-height:17px;color:#a8adbb;left:247.5px;letter-spacing:0.631px;">25</span>
<span class="t s" style="top:180.54px;font-size:12.8px;line-height:17px;color:#a8adbb;left:247.5px;letter-spacing:0.631px;">26</span>
<span class="t s" style="top:203.78px;font-size:12.8px;line-height:17px;color:#a8adbb;left:247.5px;letter-spacing:0.631px;">27</span>
<span class="t s" style="top:227.02px;font-size:12.8px;line-height:17px;color:#a8adbb;left:247.5px;letter-spacing:0.631px;">28</span>
<span class="t s" style="top:250.26px;font-size:12.8px;line-height:17px;color:#a8adbb;left:247.5px;letter-spacing:0.631px;">29</span>
<span class="t s" style="top:273.5px;font-size:12.8px;line-height:17px;color:#a8adbb;left:247.5px;letter-spacing:0.631px;">30</span>
<span class="t s" style="top:296.74px;font-size:12.8px;line-height:17px;color:#a8adbb;left:247.5px;letter-spacing:0.631px;">31</span>
<span class="t s" style="top:319.98px;font-size:12.8px;line-height:17px;color:#a8adbb;left:247.5px;letter-spacing:0.631px;">32</span>
<span class="t s" style="top:343.22px;font-size:12.8px;line-height:17px;color:#a8adbb;left:247.5px;letter-spacing:0.631px;">33</span>
<span class="t s" style="top:366.46px;font-size:12.8px;line-height:17px;color:#a8adbb;left:247.5px;letter-spacing:0.631px;">34</span>
<span class="t s" style="top:389.7px;font-size:12.8px;line-height:17px;color:#a8adbb;left:247.5px;letter-spacing:0.631px;">35</span>
<span class="t s" style="top:412.94px;font-size:12.8px;line-height:17px;color:#a8adbb;left:247.5px;letter-spacing:0.631px;">36</span>
<span class="t s" style="top:436.18px;font-size:12.8px;line-height:17px;color:#a8adbb;left:247.5px;letter-spacing:0.631px;">37</span>
<span class="t s" style="top:482.66px;font-size:12.8px;line-height:17px;color:#a8adbb;left:247.5px;letter-spacing:0.631px;">39</span>
<span class="t s" style="top:505.9px;font-size:12.8px;line-height:17px;color:#a8adbb;left:247.5px;letter-spacing:0.631px;">40</span>
<span class="t s" style="top:529.14px;font-size:12.8px;line-height:17px;color:#a8adbb;left:247.5px;letter-spacing:0.631px;">41</span>
<span class="t s" style="top:552.38px;font-size:12.8px;line-height:17px;color:#a8adbb;left:247.5px;letter-spacing:0.631px;">42</span>
<span class="t s" style="top:575.62px;font-size:12.8px;line-height:17px;color:#a8adbb;left:247.5px;letter-spacing:0.631px;">43</span>
<span class="t s" style="top:598.86px;font-size:12.8px;line-height:17px;color:#a8adbb;left:247.5px;letter-spacing:0.631px;">44</span>
<span class="t s" style="top:622.1px;font-size:12.8px;line-height:17px;color:#a8adbb;left:247.5px;letter-spacing:0.631px;">45</span>
<span class="t s" style="top:645.34px;font-size:12.8px;line-height:17px;color:#a8adbb;left:247.5px;letter-spacing:0.631px;">46</span>
<div style="left:241px;top:668px;width:64px;height:8px;overflow:hidden"><span class="t s" style="left:6.500px;top:-1px;font-size:12.800px;line-height:16px;color:#a8adbb">47</span></div>
<div style="left:248px;top:460.22px;width:14.4px;height:14.4px;background:#e2505f;border-radius:50%;"></div>
<div style="left:301.3px;top:433.36px;width:3.6px;height:21.439999999999998px;background:#8fb1ea;border-radius:1.500px;"></div>
<span class="t m" style="left:308px;top:156.7px;font-size:13.7px;line-height:20px;-webkit-text-stroke:0.280px currentColor"><span style="color:#15152a">print()</span></span>
<span class="t m" style="left:308px;top:179.94px;font-size:13.7px;line-height:20px;-webkit-text-stroke:0.280px currentColor"><span style="color:#15152a">print(</span><span style="color:#1f8c3a">f"columns: </span><span style="color:#0033b3">{</span><span style="color:#15152a">df_tokyo.columns</span><span style="color:#0033b3">}</span><span style="color:#1f8c3a">"</span><span style="color:#15152a">)</span></span>
<span class="t m" style="left:308px;top:203.18px;font-size:13.7px;line-height:20px;-webkit-text-stroke:0.280px currentColor"><span style="color:#15152a">print()</span></span>
<span class="t m" style="left:308px;top:249.66px;font-size:13.7px;line-height:20px;-webkit-text-stroke:0.280px currentColor"><span class=it style="color:#8c8c8c;font-style:italic"># <i class=j style="width:66.99px;letter-spacing:-.3px">定数を追加</i></span></span>
<span class="t m" style="left:308px;top:272.9px;font-size:13.7px;line-height:20px;-webkit-text-stroke:0.280px currentColor"><span style="color:#15152a">df_tokyo[</span><span style="color:#1f8c3a">"<i class=j style="width:13.4px;letter-spacing:-.3px">国</i>"</span><span style="color:#15152a">] = </span><span style="color:#1f8c3a">"<i class=j style="width:26.8px;letter-spacing:-.3px">日本</i>"</span></span>
<span class="t m" style="left:308px;top:319.38px;font-size:13.7px;line-height:20px;-webkit-text-stroke:0.280px currentColor"><span style="color:#15152a">print(</span><span style="color:#1f8c3a">"="</span><span style="color:#15152a"> * </span><span style="color:#2f62d8">60</span><span style="color:#15152a">)</span></span>
<span class="t m" style="left:308px;top:342.62px;font-size:13.7px;line-height:20px;-webkit-text-stroke:0.280px currentColor"><span style="color:#15152a">print(</span><span style="color:#1f8c3a">"<i class=j style="width:66.99px;letter-spacing:-.3px">定数を追加</i>: df['<i class=j style="width:13.4px;letter-spacing:-.3px">国</i>'] = '<i class=j style="width:26.8px;letter-spacing:-.3px">日本</i>'"</span><span style="color:#15152a">)</span></span>
<span class="t m" style="left:308px;top:365.86px;font-size:13.7px;line-height:20px;-webkit-text-stroke:0.280px currentColor"><span style="color:#15152a">print(</span><span style="color:#1f8c3a">"="</span><span style="color:#15152a"> * </span><span style="color:#2f62d8">60</span><span style="color:#15152a">)</span></span>
<span class="t m" style="left:308px;top:389.1px;font-size:13.7px;line-height:20px;-webkit-text-stroke:0.280px currentColor"><span style="color:#15152a">print(df_tokyo)</span></span>
<span class="t m" style="left:308px;top:412.34px;font-size:13.7px;line-height:20px;-webkit-text-stroke:0.280px currentColor"><span style="color:#15152a">print()</span></span>
<span class="t m" style="left:308px;top:435.58px;font-size:13.7px;line-height:20px;-webkit-text-stroke:0.280px currentColor"><span style="color:#15152a">print(</span><span style="color:#1f8c3a">f"<i class=j style="width:80.39px;letter-spacing:-.3px">列のリストは</i>: </span><span style="color:#0033b3">{</span><span style="color:#15152a">df_tokyo.columns</span><span style="color:#0033b3">}</span><span style="color:#1f8c3a">"</span><span style="color:#15152a">)</span></span>
<span class="t m" style="left:308px;top:458.82px;font-size:13.7px;line-height:20px;-webkit-text-stroke:0.280px currentColor"><span style="color:#fff">print()</span></span>
<span class="t m" style="left:308px;top:505.3px;font-size:13.7px;line-height:20px;-webkit-text-stroke:0.280px currentColor"><span class=it style="color:#8c8c8c;font-style:italic"># <i class=j style="width:93.79px;letter-spacing:-.3px">別の定数を追加</i></span></span>
<span class="t m" style="left:308px;top:528.54px;font-size:13.7px;line-height:20px;-webkit-text-stroke:0.280px currentColor"><span style="color:#15152a">df_tokyo[</span><span style="color:#1f8c3a">"<i class=j style="width:26.8px;letter-spacing:-.3px">大陸</i>"</span><span style="color:#15152a">] = </span><span style="color:#1f8c3a">"<i class=j style="width:40.2px;letter-spacing:-.3px">アジア</i>"</span></span>
<span class="t m" style="left:308px;top:575.02px;font-size:13.7px;line-height:20px;-webkit-text-stroke:0.280px currentColor"><span style="color:#15152a">print(</span><span style="color:#1f8c3a">"="</span><span style="color:#15152a"> * </span><span style="color:#2f62d8">60</span><span style="color:#15152a">)</span></span>
<span class="t m" style="left:308px;top:598.26px;font-size:13.7px;line-height:20px;-webkit-text-stroke:0.280px currentColor"><span style="color:#15152a">print(</span><span style="color:#1f8c3a">"<i class=j style="width:66.99px;letter-spacing:-.3px">定数を追加</i>: df['<i class=j style="width:26.8px;letter-spacing:-.3px">大陸</i>'] = '<i class=j style="width:40.2px;letter-spacing:-.3px">アジア</i>'"</span><span style="color:#15152a">)</span></span>
<span class="t m" style="left:308px;top:621.5px;font-size:13.7px;line-height:20px;-webkit-text-stroke:0.280px currentColor"><span style="color:#15152a">print(</span><span style="color:#1f8c3a">"="</span><span style="color:#15152a"> * </span><span style="color:#2f62d8">60</span><span style="color:#15152a">)</span></span>
<span class="t m" style="left:308px;top:644.74px;font-size:13.7px;line-height:20px;-webkit-text-stroke:0.280px currentColor"><span style="color:#15152a">print(df_tokyo[[</span><span style="color:#1f8c3a">"<i class=j style="width:26.8px;letter-spacing:-.3px">都市</i>"</span><span style="color:#15152a">, </span><span style="color:#1f8c3a">"<i class=j style="width:13.4px;letter-spacing:-.3px">国</i>"</span><span style="color:#15152a">, </span><span style="color:#1f8c3a">"<i class=j style="width:26.8px;letter-spacing:-.3px">大陸</i>"</span><span style="color:#15152a">]])</span></span>
<div style="left:308px;top:668.8px;width:89px;height:7.2px;background:#dedede;"></div>
<div style="left:724px;top:391px;width:7px;height:224px;background:rgba(0,0,0,.15);"></div>
<div style="left:720.5px;top:350.6px;width:10.7px;height:1.5px;background:#c9a0ee;"></div>
<div style="left:720.5px;top:360.7px;width:10.7px;height:1.5px;background:#c9a0ee;"></div>
<div style="left:720.5px;top:370.3px;width:10.7px;height:1.5px;background:#c9a0ee;"></div>
<div style="left:720.5px;top:380.3px;width:10.7px;height:1.5px;background:#c9a0ee;"></div>
<div style="left:720.5px;top:390.3px;width:10.7px;height:1.5px;background:#c9a0ee;"></div>
<div style="left:720.5px;top:400.3px;width:10.7px;height:1.5px;background:#c9a0ee;"></div>
<div style="left:720.5px;top:410.3px;width:10.7px;height:1.5px;background:#c9a0ee;"></div>
<div style="left:720.5px;top:459.0px;width:10.7px;height:1.5px;background:#c9a0ee;"></div>
<div style="left:720.5px;top:469.90000000000003px;width:10.7px;height:1.5px;background:#c9a0ee;"></div>
<div style="left:720.5px;top:480.3px;width:10.7px;height:1.5px;background:#c9a0ee;"></div>
<div style="left:720.5px;top:490.3px;width:10.7px;height:1.5px;background:#c9a0ee;"></div>
<div style="left:720.5px;top:500.3px;width:10.7px;height:1.5px;background:#c9a0ee;"></div>
<div style="left:720.5px;top:510.3px;width:10.7px;height:1.5px;background:#c9a0ee;"></div>
<div style="left:720.5px;top:570.3px;width:10.7px;height:1.5px;background:#c9a0ee;"></div>
<div style="left:720.5px;top:580.3px;width:10.7px;height:1.5px;background:#c9a0ee;"></div>
<div style="left:720.5px;top:590.3px;width:10.7px;height:1.5px;background:#c9a0ee;"></div>
<div style="left:720.5px;top:600.3px;width:10.7px;height:1.5px;background:#c9a0ee;"></div>
<div style="left:720.5px;top:520.3px;width:10.7px;height:1.5px;background:#2f5fa8;"></div>
<div style="left:717px;top:508px;width:1px;height:3px;background:#9ab0d8;"></div>
<div style="left:731px;top:120px;width:1px;height:557px;background:#ebecf0;"></div>
<div style="left:732px;top:120px;width:677px;height:32px;background:#f7f8fa;"></div>
<div style="left:732px;top:151px;width:677px;height:1px;background:#ebecf0;"></div>
<span class="t s b" style="top:130.0px;font-size:9.8px;line-height:13px;color:#27282e;left:741px;font-weight:700;"><i class=j style="width:37.63px;font-size:7.2px;letter-spacing:-.93px">データビュー</i></span>
<span class="t s" style="top:130.0px;font-size:9.8px;line-height:13px;color:#5a5d6b;left:801px;letter-spacing:-0.256px;">df_tokyo</span>
<svg style="left:844.5px;top:133.5px;" width="6" height="6" viewBox="0 0 6 6"><path d="M.5.500l5 5M5.5.5l-5 5" stroke="#a0a3ad" stroke-width=".9"/></svg>
<span class="t s" style="top:130.0px;font-size:9.8px;line-height:13px;color:#5a5d6b;left:868px;letter-spacing:-0.318px;">df_tokyo</span>
<svg style="left:911.0px;top:133.5px;" width="6" height="6" viewBox="0 0 6 6"><path d="M.5.500l5 5M5.5.5l-5 5" stroke="#a0a3ad" stroke-width=".9"/></svg>
<span class="t s" style="top:130.0px;font-size:9.8px;line-height:13px;color:#27282e;left:934.5px;letter-spacing:0.413px;">df</span>
<svg style="left:951.5px;top:133.5px;" width="6" height="6" viewBox="0 0 6 6"><path d="M.5.500l5 5M5.5.5l-5 5" stroke="#a0a3ad" stroke-width=".9"/></svg>
<div style="left:926px;top:148.5px;width:40px;height:2.5px;background:#a3a6af;border-radius:1.200px;"></div>
<div style="left:732px;top:152px;width:677px;height:24px;background:#f7f8fa;"></div>
<div style="left:739px;top:156px;width:16.5px;height:16.5px;background:#e3e4e8;border-radius:3px;"></div>
<svg style="left:742px;top:159.5px;" width="10.5" height="9.5" viewBox="0 0 10.500 9.500"><g fill="none" stroke="#6c707e" stroke-width=".9"><rect x=".5" y=".5" width="9.500" height="8.500" rx="1"/><path d="M.5 3h9.500M3.700 3v6M6.900 3v6"/></g></svg>
<svg style="left:760.5px;top:158.5px;" width="12.5" height="11" viewBox="0 0 12.500 11"><g fill="none" stroke="#6c707e" stroke-width=".9"><path d="M.7.500V10H12"/><path d="M2.500 6.500l2.500-3 2 2 3.500-3.500"/></g></svg>
<div style="left:778.5px;top:156px;width:1px;height:16px;background:#e3e4e8;"></div>
<span class="t s" style="top:159.5px;font-size:7.8px;line-height:10px;color:#5a5d6b;left:786px;letter-spacing:0.009px;">60 <i class=j style="width:6.63px;font-size:7px">行</i></span>
<svg style="left:807px;top:162.5px;" width="7" height="4.5" viewBox="0 0 7 4.500"><path d="M.7.700l2.800 2.800L6.300.7" fill="none" stroke="#818594" stroke-width=".9"/></svg>
<span class="t s" style="top:159.5px;font-size:7.8px;line-height:10px;color:#a8adbb;left:822px;letter-spacing:0.25px;">60 <i class=j style="width:6.63px;font-size:7px">行</i> × 7 <i class=j style="width:6.63px;font-size:7px">列</i></span>
<svg style="left:1311px;top:160.2px;" width="9" height="9.5" viewBox="0 0 9 9.500"><path d="M.6.600h7.800L5.500 4.600V9L3.500 7.800V4.600z" fill="none" stroke="#6c707e" stroke-width=".9" stroke-linejoin="round"/></svg>
<svg style="left:1330px;top:159.7px;" width="11" height="10" viewBox="0 0 11 10"><g fill="none" stroke="#6c707e" stroke-width=".9"><path d="M9.800 4A4.300 4.300 0 0 0 2 2.500M1.200 6A4.300 4.300 0 0 0 9 7.500"/><path d="M2 .5v2.200h2.200M9 9.500V7.300H6.800"/></g></svg>
<svg style="left:1349px;top:158.5px;" width="13" height="12.5" viewBox="0 0 13 12.500"><g fill="none" stroke="#6c707e" stroke-width=".9" stroke-linejoin="round"><path d="M7 1.800L11.800 6.600 7 11.400 2.200 6.600z"/><path d="M7 1.800L8.200.6"/></g><path d="M2.500 6.600h9" stroke="#5b8def" stroke-width="1"/><circle cx="1.600" cy="10.300" r="1.100" fill="none" stroke="#3574f0" stroke-width=".8"/><path d="M12.800 10v2.300H10.500z" fill="#6c707e"/></svg>
<svg style="left:1369.5px;top:159.2px;" width="12" height="11.5" viewBox="0 0 12 11.500"><g fill="none" stroke="#6c707e" stroke-width=".9"><rect x=".6" y="3" width="3" height="6"/><rect x="3.600" y=".6" width="3" height="8.400"/><rect x="6.600" y="4.500" width="3" height="4.500"/></g><path d="M12 8.500v2.500H9.500z" fill="#6c707e"/></svg>
<div style="left:1393.8px;top:160.8px;width:1.4px;height:1.4px;background:#6c707e;border-radius:50%;"></div>
<div style="left:1393.8px;top:164.3px;width:1.4px;height:1.4px;background:#6c707e;border-radius:50%;"></div>
<div style="left:1393.8px;top:167.8px;width:1.4px;height:1.4px;background:#6c707e;border-radius:50%;"></div>
<div style="left:732px;top:176px;width:670px;height:29px;background:#ebebeb;"></div>
<svg style="left:747.5px;top:187.5px;" width="4" height="7" viewBox="0 0 4 7"><path d="M2 0L3.800 2.600H.2zM2 7L.2 4.400h3.600z" fill="#5a5d6b"/></svg>
<svg style="left:766.5px;top:185.5px;" width="11.5" height="11.5" viewBox="0 0 11.500 11.500"><g fill="none" stroke="#b4b7c0" stroke-width=".8"><path d="M5.750.6l4.700 2.600v5.100l-4.700 2.600-4.700-2.600V3.200z"/><path d="M1.050 3.200l4.700 2.600 4.700-2.600M5.750 5.800v5.100"/></g></svg>
<span class="t s" style="top:184.0px;font-size:13.8px;line-height:18px;color:#1a1a1a;left:781px;"><i class=j style="width:27.19px;letter-spacing:-.2px">都市</i></span>
<svg style="left:898px;top:187.5px;" width="4" height="7" viewBox="0 0 4 7"><path d="M2 0L3.800 2.600H.2zM2 7L.2 4.400h3.600z" fill="#5a5d6b"/></svg>
<div style="left:917.0px;top:186.9px;width:11px;height:0.8px;background:#d2d4d9;"></div>
<div style="left:917.0px;top:195px;width:11px;height:0.8px;background:#d2d4d9;"></div>
<span class="t s" style="top:187.4px;font-size:5.6px;line-height:8px;color:#d2d4d9;left:917.5px;letter-spacing:0.219px;">123</span>
<span class="t s" style="top:184.0px;font-size:13.8px;line-height:18px;color:#1a1a1a;left:931.0px;"><i class=j style="width:13.59px">月</i></span>
<svg style="left:1047.5px;top:187.5px;" width="4" height="7" viewBox="0 0 4 7"><path d="M2 0L3.800 2.600H.2zM2 7L.2 4.400h3.600z" fill="#5a5d6b"/></svg>
<div style="left:1067.0px;top:186.9px;width:11px;height:0.8px;background:#d2d4d9;"></div>
<div style="left:1067.0px;top:195px;width:11px;height:0.8px;background:#d2d4d9;"></div>
<span class="t s" style="top:187.4px;font-size:5.6px;line-height:8px;color:#d2d4d9;left:1067.5px;letter-spacing:0.219px;">123</span>
<span class="t s" style="top:184.0px;font-size:13.8px;line-height:18px;color:#1a1a1a;left:1081.0px;"><i class=j style="width:40.78px;letter-spacing:-.2px">降水量</i></span>
<svg style="left:1197.5px;top:187.5px;" width="4" height="7" viewBox="0 0 4 7"><path d="M2 0L3.800 2.600H.2zM2 7L.2 4.400h3.600z" fill="#5a5d6b"/></svg>
<div style="left:1217.0px;top:186.9px;width:11px;height:0.8px;background:#d2d4d9;"></div>
<div style="left:1217.0px;top:195px;width:11px;height:0.8px;background:#d2d4d9;"></div>
<span class="t s" style="top:187.4px;font-size:5.6px;line-height:8px;color:#d2d4d9;left:1217.5px;letter-spacing:0.219px;">123</span>
<span class="t s" style="top:184.0px;font-size:13.8px;line-height:18px;color:#1a1a1a;left:1231.0px;"><i class=j style="width:54.37px;letter-spacing:-.2px">最高気温</i></span>
<svg style="left:1347.5px;top:187.5px;" width="4" height="7" viewBox="0 0 4 7"><path d="M2 0L3.800 2.600H.2zM2 7L.2 4.400h3.600z" fill="#5a5d6b"/></svg>
<div style="left:1367.0px;top:186.9px;width:11px;height:0.8px;background:#d2d4d9;"></div>
<div style="left:1367.0px;top:195px;width:11px;height:0.8px;background:#d2d4d9;"></div>
<span class="t s" style="top:187.4px;font-size:5.6px;line-height:8px;color:#d2d4d9;left:1367.5px;letter-spacing:0.219px;">123</span>
<div style="left:1381.0px;top:180px;width:21.0px;height:24px;overflow:hidden"><span class="t s" style="left:0;top:4px;font-size:13.800px;line-height:18px;color:#1a1a1a"><i class=j style="width:27.19px;letter-spacing:-.2px">平均</i></span></div>
<div style="left:732px;top:205px;width:670px;height:87px;background:#fff;"></div>
<div style="left:762.0px;top:205px;width:1px;height:87px;background:#ececec;"></div>
<div style="left:912.0px;top:205px;width:1px;height:87px;background:#ececec;"></div>
<div style="left:1062.0px;top:205px;width:1px;height:87px;background:#ececec;"></div>
<div style="left:1212.0px;top:205px;width:1px;height:87px;background:#ececec;"></div>
<div style="left:1362.0px;top:205px;width:1px;height:87px;background:#ececec;"></div>
<span class="t s" style="top:209.0px;font-size:7.2px;line-height:9px;color:#c3c5cc;left:767.0px;letter-spacing:-0.011px;">None <i class=j style="width:6.84px;font-size:6.9px">数</i></span>
<span class="t m" style="top:208.8px;font-size:12.5px;line-height:16px;color:#27282e;left:901.5px;-webkit-text-stroke:0.200px currentColor;">0</span>
<span class="t s" style="top:209.0px;font-size:7.2px;line-height:9px;color:#c3c5cc;left:917.0px;letter-spacing:-0.011px;">None <i class=j style="width:6.84px;font-size:6.9px">数</i></span>
<span class="t m" style="top:208.8px;font-size:12.5px;line-height:16px;color:#27282e;left:1051.5px;-webkit-text-stroke:0.200px currentColor;">0</span>
<span class="t s" style="top:209.0px;font-size:7.2px;line-height:9px;color:#c3c5cc;left:1067.0px;letter-spacing:-0.011px;">None <i class=j style="width:6.84px;font-size:6.9px">数</i></span>
<span class="t m" style="top:208.8px;font-size:12.5px;line-height:16px;color:#27282e;left:1201.5px;-webkit-text-stroke:0.200px currentColor;">0</span>
<span class="t s" style="top:209.0px;font-size:7.2px;line-height:9px;color:#c3c5cc;left:1217.0px;letter-spacing:-0.011px;">None <i class=j style="width:6.84px;font-size:6.9px">数</i></span>
<span class="t m" style="top:208.8px;font-size:12.5px;line-height:16px;color:#27282e;left:1351.5px;-webkit-text-stroke:0.200px currentColor;">0</span>
<span class="t s" style="top:209.0px;font-size:7.2px;line-height:9px;color:#c3c5cc;left:1367.0px;letter-spacing:-0.011px;">None <i class=j style="width:6.84px;font-size:6.9px">数</i></span>
<span class="t s" style="top:231.7px;font-size:8.8px;line-height:11px;color:#27282e;left:767px;letter-spacing:-0.697px;">TYO</span>
<span class="t s" style="top:251.8px;font-size:8.8px;line-height:11px;color:#27282e;left:767px;letter-spacing:-0.723px;">SIN</span>
<span class="t s" style="top:272.8px;font-size:7.8px;line-height:10px;color:#b9bcc5;left:767px;"><i class=j style="width:22.23px;letter-spacing:-.4px">その他</i></span>
<span class="t m" style="top:232.3px;font-size:13.3px;line-height:17px;color:#27282e;left:885.06px;-webkit-text-stroke:0.250px currentColor;">20%</span>
<span class="t m" style="top:252.3px;font-size:13.3px;line-height:17px;color:#27282e;left:885.06px;-webkit-text-stroke:0.250px currentColor;">20%</span>
<span class="t m" style="top:272.3px;font-size:13.3px;line-height:17px;color:#27282e;left:885.06px;-webkit-text-stroke:0.250px currentColor;">60%</span>
<div style="left:919.2px;top:235.0px;width:5.5px;height:40.5px;background:#3573e0;"></div>
<div style="left:926.14px;top:235.0px;width:5.5px;height:40.5px;background:#3573e0;"></div>
<div style="left:933.08px;top:274.3px;width:5.5px;height:1.2px;background:#a9c4f1;"></div>
<div style="left:940.02px;top:235.0px;width:5.5px;height:40.5px;background:#3573e0;"></div>
<div style="left:946.96px;top:274.3px;width:5.5px;height:1.2px;background:#a9c4f1;"></div>
<div style="left:953.9px;top:235.0px;width:5.5px;height:40.5px;background:#3573e0;"></div>
<div style="left:960.84px;top:274.3px;width:5.5px;height:1.2px;background:#a9c4f1;"></div>
<div style="left:967.78px;top:235.0px;width:5.5px;height:40.5px;background:#3573e0;"></div>
<div style="left:974.72px;top:274.3px;width:5.5px;height:1.2px;background:#a9c4f1;"></div>
<div style="left:981.66px;top:235.0px;width:5.5px;height:40.5px;background:#3573e0;"></div>
<div style="left:988.6px;top:235.0px;width:5.5px;height:40.5px;background:#3573e0;"></div>
<div style="left:995.54px;top:274.3px;width:5.5px;height:1.2px;background:#a9c4f1;"></div>
<div style="left:1002.48px;top:235.0px;width:5.5px;height:40.5px;background:#3573e0;"></div>
<div style="left:1009.42px;top:274.3px;width:5.5px;height:1.2px;background:#a9c4f1;"></div>
<div style="left:1016.36px;top:235.0px;width:5.5px;height:40.5px;background:#3573e0;"></div>
<div style="left:1023.3px;top:274.3px;width:5.5px;height:1.2px;background:#a9c4f1;"></div>
<div style="left:1030.24px;top:235.0px;width:5.5px;height:40.5px;background:#3573e0;"></div>
<div style="left:1037.18px;top:274.3px;width:5.5px;height:1.2px;background:#a9c4f1;"></div>
<div style="left:1044.12px;top:235.0px;width:5.5px;height:40.5px;background:#3573e0;"></div>
<div style="left:1051.06px;top:235.0px;width:5.5px;height:40.5px;background:#3573e0;"></div>
<div style="left:1069.2px;top:235.0px;width:5.5px;height:40.5px;background:#3573e0;"></div>
<div style="left:1076.14px;top:263.5px;width:5.5px;height:12px;background:#3573e0;"></div>
<div style="left:1083.08px;top:258.8px;width:5.5px;height:16.7px;background:#3573e0;"></div>
<div style="left:1090.02px;top:240.0px;width:5.5px;height:35.5px;background:#3573e0;"></div>
<div style="left:1096.96px;top:249.5px;width:5.5px;height:26px;background:#3573e0;"></div>
<div style="left:1103.9px;top:268.0px;width:5.5px;height:7.5px;background:#3573e0;"></div>
<div style="left:1110.84px;top:263.5px;width:5.5px;height:12px;background:#3573e0;"></div>
<div style="left:1117.78px;top:274.3px;width:5.5px;height:1.2px;background:#a9c4f1;"></div>
<div style="left:1124.72px;top:263.5px;width:5.5px;height:12px;background:#3573e0;"></div>
<div style="left:1131.66px;top:274.3px;width:5.5px;height:1.2px;background:#a9c4f1;"></div>
<div style="left:1138.6px;top:249.5px;width:5.5px;height:26px;background:#3573e0;"></div>
<div style="left:1145.54px;top:263.5px;width:5.5px;height:12px;background:#3573e0;"></div>
<div style="left:1152.48px;top:258.8px;width:5.5px;height:16.7px;background:#3573e0;"></div>
<div style="left:1159.42px;top:263.5px;width:5.5px;height:12px;background:#3573e0;"></div>
<div style="left:1166.36px;top:272.5px;width:5.5px;height:3px;background:#3573e0;"></div>
<div style="left:1173.3px;top:274.3px;width:5.5px;height:1.2px;background:#a9c4f1;"></div>
<div style="left:1180.24px;top:258.8px;width:5.5px;height:16.7px;background:#3573e0;"></div>
<div style="left:1187.18px;top:274.3px;width:5.5px;height:1.2px;background:#a9c4f1;"></div>
<div style="left:1194.12px;top:274.3px;width:5.5px;height:1.2px;background:#a9c4f1;"></div>
<div style="left:1201.06px;top:272.5px;width:5.5px;height:3px;background:#3573e0;"></div>
<div style="left:1219.2px;top:271.3px;width:5.5px;height:4.2px;background:#3573e0;"></div>
<div style="left:1226.14px;top:273.9px;width:5.5px;height:1.6px;background:#3573e0;"></div>
<div style="left:1233.08px;top:271.3px;width:5.5px;height:4.2px;background:#3573e0;"></div>
<div style="left:1240.02px;top:271.3px;width:5.5px;height:4.2px;background:#3573e0;"></div>
<div style="left:1246.96px;top:268.5px;width:5.5px;height:7px;background:#3573e0;"></div>
<div style="left:1253.9px;top:271.3px;width:5.5px;height:4.2px;background:#3573e0;"></div>
<div style="left:1260.84px;top:273.9px;width:5.5px;height:1.6px;background:#3573e0;"></div>
<div style="left:1267.78px;top:262.3px;width:5.5px;height:13.2px;background:#3573e0;"></div>
<div style="left:1274.72px;top:271.3px;width:5.5px;height:4.2px;background:#3573e0;"></div>
<div style="left:1281.66px;top:268.5px;width:5.5px;height:7px;background:#3573e0;"></div>
<div style="left:1288.6px;top:253.5px;width:5.5px;height:22px;background:#3573e0;"></div>
<div style="left:1295.54px;top:274.3px;width:5.5px;height:1.2px;background:#a9c4f1;"></div>
<div style="left:1302.48px;top:235.0px;width:5.5px;height:40.5px;background:#3573e0;"></div>
<div style="left:1309.42px;top:250.5px;width:5.5px;height:25px;background:#3573e0;"></div>
<div style="left:1316.36px;top:274.3px;width:5.5px;height:1.2px;background:#a9c4f1;"></div>
<div style="left:1323.3px;top:273.9px;width:5.5px;height:1.6px;background:#3573e0;"></div>
<div style="left:1330.24px;top:273.9px;width:5.5px;height:1.6px;background:#3573e0;"></div>
<div style="left:1337.18px;top:274.3px;width:5.5px;height:1.2px;background:#a9c4f1;"></div>
<div style="left:1344.12px;top:273.9px;width:5.5px;height:1.6px;background:#3573e0;"></div>
<div style="left:1351.06px;top:268.5px;width:5.5px;height:7px;background:#3573e0;"></div>
<div style="left:1368.8px;top:271.3px;width:5.5px;height:4.2px;background:#3573e0;"></div>
<div style="left:1375.74px;top:273.9px;width:5.5px;height:1.6px;background:#3573e0;"></div>
<div style="left:1382.68px;top:271.3px;width:5.5px;height:4.2px;background:#3573e0;"></div>
<div style="left:1389.62px;top:271.3px;width:5.5px;height:4.2px;background:#3573e0;"></div>
<div style="left:1396.56px;top:271.3px;width:5.440000000000055px;height:4.2px;background:#3573e0;"></div>
<span class="t m" style="top:276.5px;font-size:6px;line-height:8px;color:#d0d2d8;left:918.5px;">1</span>
<span class="t m" style="top:276.5px;font-size:6px;line-height:8px;color:#d0d2d8;left:1051.3px;">12</span>
<span class="t m" style="top:276.5px;font-size:6px;line-height:8px;color:#d0d2d8;left:1068.5px;">0</span>
<span class="t m" style="top:276.5px;font-size:6px;line-height:8px;color:#d0d2d8;left:1197.7px;">300</span>
<span class="t m" style="top:276.5px;font-size:6px;line-height:8px;color:#d0d2d8;left:1218.5px;">10</span>
<span class="t m" style="top:276.5px;font-size:6px;line-height:8px;color:#d0d2d8;left:1351.3px;">43</span>
<span class="t m" style="top:276.5px;font-size:6px;line-height:8px;color:#d0d2d8;left:1368.5px;">5</span>
<div style="left:732px;top:292px;width:670px;height:378px;background:#fff;"></div>
<div style="left:912.5px;top:292.5px;width:149.5px;height:26.2px;background:#5a8cee;"></div>
<div style="left:1062.5px;top:292.5px;width:149.5px;height:26.2px;background:#8fb3f6;"></div>
<div style="left:1212.5px;top:292.5px;width:149.5px;height:26.2px;background:#5a8cee;"></div>
<div style="left:1362.5px;top:292.5px;width:39.0px;height:26.2px;background:#5a8cee;"></div>
<div style="left:732px;top:318.7px;width:670px;height:0.8px;background:#eef0f4;opacity:.9;"></div>
<span class="t m b" style="top:298.1px;font-size:13.3px;line-height:17px;color:#1a1a1a;left:751.52px;font-weight:700;-webkit-text-stroke:0.250px currentColor;">0</span>
<span class="t m" style="top:298.1px;font-size:13.3px;line-height:17px;color:#27282e;left:765.5px;letter-spacing:0.352px;-webkit-text-stroke:0.250px currentColor;">TYO</span>
<span class="t m" style="top:298.1px;font-size:13.3px;line-height:17px;color:#1e2330;left:1051.52px;-webkit-text-stroke:0.250px currentColor;">1</span>
<span class="t m" style="top:298.1px;font-size:13.3px;line-height:17px;color:#1e2330;left:1193.54px;-webkit-text-stroke:0.250px currentColor;">50</span>
<span class="t m" style="top:298.1px;font-size:13.3px;line-height:17px;color:#1e2330;left:1343.54px;-webkit-text-stroke:0.250px currentColor;">10</span>
<div style="left:912.5px;top:319.5px;width:149.5px;height:26.2px;background:#5a8cee;"></div>
<div style="left:1062.5px;top:319.5px;width:149.5px;height:26.2px;background:#ea9aa2;"></div>
<div style="left:1212.5px;top:319.5px;width:149.5px;height:26.2px;background:#f8d6d8;"></div>
<div style="left:1362.5px;top:319.5px;width:39.0px;height:26.2px;background:#f5c1c6;"></div>
<div style="left:732px;top:345.7px;width:670px;height:0.8px;background:#eef0f4;opacity:.9;"></div>
<span class="t m b" style="top:325.1px;font-size:13.3px;line-height:17px;color:#1a1a1a;left:751.52px;font-weight:700;-webkit-text-stroke:0.250px currentColor;">1</span>
<span class="t m" style="top:325.1px;font-size:13.3px;line-height:17px;color:#27282e;left:765.5px;letter-spacing:0.352px;-webkit-text-stroke:0.250px currentColor;">SIN</span>
<span class="t m" style="top:325.1px;font-size:13.3px;line-height:17px;color:#1e2330;left:1051.52px;-webkit-text-stroke:0.250px currentColor;">1</span>
<span class="t m" style="top:325.1px;font-size:13.3px;line-height:17px;color:#1e2330;left:1185.56px;-webkit-text-stroke:0.250px currentColor;">250</span>
<span class="t m" style="top:325.1px;font-size:13.3px;line-height:17px;color:#1e2330;left:1343.54px;-webkit-text-stroke:0.250px currentColor;">30</span>
<div style="left:912.5px;top:346.5px;width:149.5px;height:26.2px;background:#5a8cee;"></div>
<div style="left:1062.5px;top:346.5px;width:149.5px;height:26.2px;background:#6594ef;"></div>
<div style="left:1212.5px;top:346.5px;width:149.5px;height:26.2px;background:#ccdaf9;"></div>
<div style="left:1362.5px;top:346.5px;width:39.0px;height:26.2px;background:#bacef7;"></div>
<div style="left:732px;top:372.7px;width:670px;height:0.8px;background:#eef0f4;opacity:.9;"></div>
<span class="t m b" style="top:352.1px;font-size:13.3px;line-height:17px;color:#1a1a1a;left:751.52px;font-weight:700;-webkit-text-stroke:0.250px currentColor;">2</span>
<span class="t m" style="top:352.1px;font-size:13.3px;line-height:17px;color:#27282e;left:765.5px;letter-spacing:0.352px;-webkit-text-stroke:0.250px currentColor;">RUH</span>
<span class="t m" style="top:352.1px;font-size:13.3px;line-height:17px;color:#1e2330;left:1051.52px;-webkit-text-stroke:0.250px currentColor;">1</span>
<span class="t m" style="top:352.1px;font-size:13.3px;line-height:17px;color:#1e2330;left:1193.54px;-webkit-text-stroke:0.250px currentColor;">10</span>
<span class="t m" style="top:352.1px;font-size:13.3px;line-height:17px;color:#1e2330;left:1343.54px;-webkit-text-stroke:0.250px currentColor;">21</span>
<div style="left:912.5px;top:373.5px;width:149.5px;height:26.2px;background:#5a8cee;"></div>
<div style="left:1062.5px;top:373.5px;width:149.5px;height:26.2px;background:#8fb3f6;"></div>
<div style="left:1212.5px;top:373.5px;width:149.5px;height:26.2px;background:#e4ecfb;"></div>
<div style="left:1362.5px;top:373.5px;width:39.0px;height:26.2px;background:#f6f9fe;"></div>
<div style="left:732px;top:399.7px;width:670px;height:0.8px;background:#eef0f4;opacity:.9;"></div>
<span class="t m b" style="top:379.1px;font-size:13.3px;line-height:17px;color:#1a1a1a;left:751.52px;font-weight:700;-webkit-text-stroke:0.250px currentColor;">3</span>
<span class="t m" style="top:379.1px;font-size:13.3px;line-height:17px;color:#27282e;left:765.5px;letter-spacing:0.352px;-webkit-text-stroke:0.250px currentColor;">MIA</span>
<span class="t m" style="top:379.1px;font-size:13.3px;line-height:17px;color:#1e2330;left:1051.52px;-webkit-text-stroke:0.250px currentColor;">1</span>
<span class="t m" style="top:379.1px;font-size:13.3px;line-height:17px;color:#1e2330;left:1193.54px;-webkit-text-stroke:0.250px currentColor;">50</span>
<span class="t m" style="top:379.1px;font-size:13.3px;line-height:17px;color:#1e2330;left:1343.54px;-webkit-text-stroke:0.250px currentColor;">24</span>
<div style="left:912.5px;top:400.5px;width:149.5px;height:26.2px;background:#5a8cee;"></div>
<div style="left:1062.5px;top:400.5px;width:149.5px;height:26.2px;background:#83aaf4;"></div>
<div style="left:1212.5px;top:400.5px;width:149.5px;height:26.2px;background:#7aa3f2;"></div>
<div style="left:1362.5px;top:400.5px;width:39.0px;height:26.2px;background:#80a8f3;"></div>
<div style="left:732px;top:426.7px;width:670px;height:0.8px;background:#eef0f4;opacity:.9;"></div>
<span class="t m b" style="top:406.1px;font-size:13.3px;line-height:17px;color:#1a1a1a;left:751.52px;font-weight:700;-webkit-text-stroke:0.250px currentColor;">4</span>
<span class="t m" style="top:406.1px;font-size:13.3px;line-height:17px;color:#27282e;left:765.5px;letter-spacing:0.352px;-webkit-text-stroke:0.250px currentColor;">BCN</span>
<span class="t m" style="top:406.1px;font-size:13.3px;line-height:17px;color:#1e2330;left:1051.52px;-webkit-text-stroke:0.250px currentColor;">1</span>
<span class="t m" style="top:406.1px;font-size:13.3px;line-height:17px;color:#1e2330;left:1193.54px;-webkit-text-stroke:0.250px currentColor;">40</span>
<span class="t m" style="top:406.1px;font-size:13.3px;line-height:17px;color:#1e2330;left:1343.54px;-webkit-text-stroke:0.250px currentColor;">14</span>
<div style="left:912.5px;top:427.5px;width:149.5px;height:26.2px;background:#709cf1;"></div>
<div style="left:1062.5px;top:427.5px;width:149.5px;height:26.2px;background:#9bbaf6;"></div>
<div style="left:1212.5px;top:427.5px;width:149.5px;height:26.2px;background:#5f90ef;"></div>
<div style="left:1362.5px;top:427.5px;width:39.0px;height:26.2px;background:#5a8cee;"></div>
<div style="left:732px;top:453.7px;width:670px;height:0.8px;background:#eef0f4;opacity:.9;"></div>
<span class="t m b" style="top:433.1px;font-size:13.3px;line-height:17px;color:#1a1a1a;left:751.52px;font-weight:700;-webkit-text-stroke:0.250px currentColor;">5</span>
<span class="t m" style="top:433.1px;font-size:13.3px;line-height:17px;color:#27282e;left:765.5px;letter-spacing:0.352px;-webkit-text-stroke:0.250px currentColor;">TYO</span>
<span class="t m" style="top:433.1px;font-size:13.3px;line-height:17px;color:#1e2330;left:1051.52px;-webkit-text-stroke:0.250px currentColor;">2</span>
<span class="t m" style="top:433.1px;font-size:13.3px;line-height:17px;color:#1e2330;left:1193.54px;-webkit-text-stroke:0.250px currentColor;">60</span>
<span class="t m" style="top:433.1px;font-size:13.3px;line-height:17px;color:#1e2330;left:1343.54px;-webkit-text-stroke:0.250px currentColor;">11</span>
<div style="left:912.5px;top:454.5px;width:149.5px;height:26.2px;background:#709cf1;"></div>
<div style="left:1062.5px;top:454.5px;width:149.5px;height:26.2px;background:#ffffff;"></div>
<div style="left:1212.5px;top:454.5px;width:149.5px;height:26.2px;background:#f8d0d3;"></div>
<div style="left:1362.5px;top:454.5px;width:39.0px;height:26.2px;background:#f2b2b8;"></div>
<div style="left:732px;top:480.7px;width:670px;height:0.8px;background:#eef0f4;opacity:.9;"></div>
<span class="t m b" style="top:460.1px;font-size:13.3px;line-height:17px;color:#1a1a1a;left:751.52px;font-weight:700;-webkit-text-stroke:0.250px currentColor;">6</span>
<span class="t m" style="top:460.1px;font-size:13.3px;line-height:17px;color:#27282e;left:765.5px;letter-spacing:0.352px;-webkit-text-stroke:0.250px currentColor;">SIN</span>
<span class="t m" style="top:460.1px;font-size:13.3px;line-height:17px;color:#1e2330;left:1051.52px;-webkit-text-stroke:0.250px currentColor;">2</span>
<span class="t m" style="top:460.1px;font-size:13.3px;line-height:17px;color:#1e2330;left:1185.56px;-webkit-text-stroke:0.250px currentColor;">150</span>
<span class="t m" style="top:460.1px;font-size:13.3px;line-height:17px;color:#1e2330;left:1343.54px;-webkit-text-stroke:0.250px currentColor;">31</span>
<div style="left:912.5px;top:481.5px;width:149.5px;height:26.2px;background:#709cf1;"></div>
<div style="left:1062.5px;top:481.5px;width:149.5px;height:26.2px;background:#6c99f0;"></div>
<div style="left:1212.5px;top:481.5px;width:149.5px;height:26.2px;background:#e4ecfb;"></div>
<div style="left:1362.5px;top:481.5px;width:39.0px;height:26.2px;background:#dce6fa;"></div>
<div style="left:732px;top:507.7px;width:670px;height:0.8px;background:#eef0f4;opacity:.9;"></div>
<span class="t m b" style="top:487.1px;font-size:13.3px;line-height:17px;color:#1a1a1a;left:751.52px;font-weight:700;-webkit-text-stroke:0.250px currentColor;">7</span>
<span class="t m" style="top:487.1px;font-size:13.3px;line-height:17px;color:#27282e;left:765.5px;letter-spacing:0.352px;-webkit-text-stroke:0.250px currentColor;">RUH</span>
<span class="t m" style="top:487.1px;font-size:13.3px;line-height:17px;color:#1e2330;left:1051.52px;-webkit-text-stroke:0.250px currentColor;">2</span>
<span class="t m" style="top:487.1px;font-size:13.3px;line-height:17px;color:#1e2330;left:1193.54px;-webkit-text-stroke:0.250px currentColor;">20</span>
<span class="t m" style="top:487.1px;font-size:13.3px;line-height:17px;color:#1e2330;left:1343.54px;-webkit-text-stroke:0.250px currentColor;">24</span>
<div style="left:912.5px;top:508.5px;width:149.5px;height:26.2px;background:#709cf1;"></div>
<div style="left:1062.5px;top:508.5px;width:149.5px;height:26.2px;background:#8fb3f6;"></div>
<div style="left:1212.5px;top:508.5px;width:149.5px;height:26.2px;background:#ebf0fc;"></div>
<div style="left:1362.5px;top:508.5px;width:39.0px;height:26.2px;background:#faf8f6;"></div>
<div style="left:732px;top:534.7px;width:670px;height:0.8px;background:#eef0f4;opacity:.9;"></div>
<span class="t m b" style="top:514.1px;font-size:13.3px;line-height:17px;color:#1a1a1a;left:751.52px;font-weight:700;-webkit-text-stroke:0.250px currentColor;">8</span>
<span class="t m" style="top:514.1px;font-size:13.3px;line-height:17px;color:#27282e;left:765.5px;letter-spacing:0.352px;-webkit-text-stroke:0.250px currentColor;">MIA</span>
<span class="t m" style="top:514.1px;font-size:13.3px;line-height:17px;color:#1e2330;left:1051.52px;-webkit-text-stroke:0.250px currentColor;">2</span>
<span class="t m" style="top:514.1px;font-size:13.3px;line-height:17px;color:#1e2330;left:1193.54px;-webkit-text-stroke:0.250px currentColor;">50</span>
<span class="t m" style="top:514.1px;font-size:13.3px;line-height:17px;color:#1e2330;left:1343.54px;-webkit-text-stroke:0.250px currentColor;">25</span>
<div style="left:912.5px;top:535.5px;width:149.5px;height:26.2px;background:#709cf1;"></div>
<div style="left:1062.5px;top:535.5px;width:149.5px;height:26.2px;background:#7fa7f3;"></div>
<div style="left:1212.5px;top:535.5px;width:149.5px;height:26.2px;background:#7fa7f3;"></div>
<div style="left:1362.5px;top:535.5px;width:39.0px;height:26.2px;background:#86acf4;"></div>
<div style="left:732px;top:561.7px;width:670px;height:0.8px;background:#eef0f4;opacity:.9;"></div>
<span class="t m b" style="top:541.1px;font-size:13.3px;line-height:17px;color:#1a1a1a;left:751.52px;font-weight:700;-webkit-text-stroke:0.250px currentColor;">9</span>
<span class="t m" style="top:541.1px;font-size:13.3px;line-height:17px;color:#27282e;left:765.5px;letter-spacing:0.352px;-webkit-text-stroke:0.250px currentColor;">BCN</span>
<span class="t m" style="top:541.1px;font-size:13.3px;line-height:17px;color:#1e2330;left:1051.52px;-webkit-text-stroke:0.250px currentColor;">2</span>
<span class="t m" style="top:541.1px;font-size:13.3px;line-height:17px;color:#1e2330;left:1193.54px;-webkit-text-stroke:0.250px currentColor;">35</span>
<span class="t m" style="top:541.1px;font-size:13.3px;line-height:17px;color:#1e2330;left:1343.54px;-webkit-text-stroke:0.250px currentColor;">15</span>
<div style="left:912.5px;top:562.5px;width:149.5px;height:26.2px;background:#8fb3f6;"></div>
<div style="left:1062.5px;top:562.5px;width:149.5px;height:26.2px;background:#cddbf9;"></div>
<div style="left:1212.5px;top:562.5px;width:149.5px;height:26.2px;background:#7aa3f2;"></div>
<div style="left:1362.5px;top:562.5px;width:39.0px;height:26.2px;background:#80a8f3;"></div>
<div style="left:732px;top:588.7px;width:670px;height:0.8px;background:#eef0f4;opacity:.9;"></div>
<span class="t m b" style="top:568.1px;font-size:13.3px;line-height:17px;color:#1a1a1a;left:743.54px;font-weight:700;-webkit-text-stroke:0.250px currentColor;">10</span>
<span class="t m" style="top:568.1px;font-size:13.3px;line-height:17px;color:#27282e;left:765.5px;letter-spacing:0.352px;-webkit-text-stroke:0.250px currentColor;">TYO</span>
<span class="t m" style="top:568.1px;font-size:13.3px;line-height:17px;color:#1e2330;left:1051.52px;-webkit-text-stroke:0.250px currentColor;">3</span>
<span class="t m" style="top:568.1px;font-size:13.3px;line-height:17px;color:#1e2330;left:1185.56px;-webkit-text-stroke:0.250px currentColor;">100</span>
<span class="t m" style="top:568.1px;font-size:13.3px;line-height:17px;color:#1e2330;left:1343.54px;-webkit-text-stroke:0.250px currentColor;">14</span>
<div style="left:912.5px;top:589.5px;width:149.5px;height:26.2px;background:#8fb3f6;"></div>
<div style="left:1062.5px;top:589.5px;width:149.5px;height:26.2px;background:#f5c9cd;"></div>
<div style="left:1212.5px;top:589.5px;width:149.5px;height:26.2px;background:#f8d0d3;"></div>
<div style="left:1362.5px;top:589.5px;width:39.0px;height:26.2px;background:#efb0b7;"></div>
<div style="left:732px;top:615.7px;width:670px;height:0.8px;background:#eef0f4;opacity:.9;"></div>
<span class="t m b" style="top:595.1px;font-size:13.3px;line-height:17px;color:#1a1a1a;left:743.54px;font-weight:700;-webkit-text-stroke:0.250px currentColor;">11</span>
<span class="t m" style="top:595.1px;font-size:13.3px;line-height:17px;color:#27282e;left:765.5px;letter-spacing:0.352px;-webkit-text-stroke:0.250px currentColor;">SIN</span>
<span class="t m" style="top:595.1px;font-size:13.3px;line-height:17px;color:#1e2330;left:1051.52px;-webkit-text-stroke:0.250px currentColor;">3</span>
<span class="t m" style="top:595.1px;font-size:13.3px;line-height:17px;color:#1e2330;left:1185.56px;-webkit-text-stroke:0.250px currentColor;">200</span>
<span class="t m" style="top:595.1px;font-size:13.3px;line-height:17px;color:#1e2330;left:1343.54px;-webkit-text-stroke:0.250px currentColor;">31</span>
<div style="left:912.5px;top:616.5px;width:149.5px;height:26.2px;background:#8fb3f6;"></div>
<div style="left:1062.5px;top:616.5px;width:149.5px;height:26.2px;background:#6c99f0;"></div>
<div style="left:1212.5px;top:616.5px;width:149.5px;height:26.2px;background:#fdf1f1;"></div>
<div style="left:1362.5px;top:616.5px;width:39.0px;height:26.2px;background:#faf8f6;"></div>
<div style="left:732px;top:642.7px;width:670px;height:0.8px;background:#eef0f4;opacity:.9;"></div>
<span class="t m b" style="top:622.1px;font-size:13.3px;line-height:17px;color:#1a1a1a;left:743.54px;font-weight:700;-webkit-text-stroke:0.250px currentColor;">12</span>
<span class="t m" style="top:622.1px;font-size:13.3px;line-height:17px;color:#27282e;left:765.5px;letter-spacing:0.352px;-webkit-text-stroke:0.250px currentColor;">RUH</span>
<span class="t m" style="top:622.1px;font-size:13.3px;line-height:17px;color:#1e2330;left:1051.52px;-webkit-text-stroke:0.250px currentColor;">3</span>
<span class="t m" style="top:622.1px;font-size:13.3px;line-height:17px;color:#1e2330;left:1193.54px;-webkit-text-stroke:0.250px currentColor;">20</span>
<span class="t m" style="top:622.1px;font-size:13.3px;line-height:17px;color:#1e2330;left:1343.54px;-webkit-text-stroke:0.250px currentColor;">28</span>
<div style="left:912.5px;top:643.5px;width:149.5px;height:26.2px;background:#8fb3f6;"></div>
<div style="left:1062.5px;top:643.5px;width:149.5px;height:26.2px;background:#8fb3f6;"></div>
<div style="left:1212.5px;top:643.5px;width:149.5px;height:26.2px;background:#fefaf9;"></div>
<div style="left:1362.5px;top:643.5px;width:39.0px;height:26.2px;background:#f9dfe1;"></div>
<div style="left:732px;top:669.7px;width:670px;height:0.8px;background:#eef0f4;opacity:.9;"></div>
<span class="t m b" style="top:649.1px;font-size:13.3px;line-height:17px;color:#1a1a1a;left:743.54px;font-weight:700;-webkit-text-stroke:0.250px currentColor;">13</span>
<span class="t m" style="top:649.1px;font-size:13.3px;line-height:17px;color:#27282e;left:765.5px;letter-spacing:0.352px;-webkit-text-stroke:0.250px currentColor;">MIA</span>
<span class="t m" style="top:649.1px;font-size:13.3px;line-height:17px;color:#1e2330;left:1051.52px;-webkit-text-stroke:0.250px currentColor;">3</span>
<span class="t m" style="top:649.1px;font-size:13.3px;line-height:17px;color:#1e2330;left:1193.54px;-webkit-text-stroke:0.250px currentColor;">60</span>
<span class="t m" style="top:649.1px;font-size:13.3px;line-height:17px;color:#1e2330;left:1343.54px;-webkit-text-stroke:0.250px currentColor;">27</span>
<div style="left:762px;top:292px;width:0.8px;height:378px;background:#ececec;"></div>
<div style="left:911.8px;top:292px;width:1px;height:378px;background:rgba(255,255,255,.55);"></div>
<div style="left:1061.8px;top:292px;width:1px;height:378px;background:rgba(255,255,255,.55);"></div>
<div style="left:1211.8px;top:292px;width:1px;height:378px;background:rgba(255,255,255,.55);"></div>
<div style="left:1361.8px;top:292px;width:1px;height:378px;background:rgba(255,255,255,.55);"></div>
<div style="left:1402.5px;top:292px;width:6.5px;height:80.5px;background:#d4d4d4;"></div>
<div style="left:732px;top:670px;width:677px;height:6.5px;background:#f2f2f2;"></div>
<div style="left:732px;top:670px;width:414.5px;height:6.5px;background:#d9d9d9;"></div>
<div style="left:1409px;top:120px;width:1px;height:557px;background:#ebecf0;"></div>
<div style="left:1410px;top:120px;width:30px;height:812px;background:#f2f4f7;"></div>
<svg style="left:1418.5px;top:128.7px;" width="13" height="15" viewBox="0 0 13 15"><g fill="none" stroke="#5a5d6b" stroke-width="1.100"><path d="M2.500 10.500V6.500a4 4 0 0 1 8 0v4l1.200 1.500H1.300z" stroke-linejoin="round"/><path d="M5 13.500a1.500 1.500 0 0 0 3 0"/></g></svg>
<div style="left:1429px;top:128.5px;width:5px;height:5px;background:#3574f0;border-radius:50%;"></div>
<svg style="left:1418px;top:159.3px;" width="15" height="13" viewBox="0 0 15 13"><g fill="none" stroke="#5a5d6b" stroke-width="1.100"><path d="M10.500 4.500C10.500 2.200 8.500 .8 6 .8S1.200 2.500 1.200 5 3 9 5 9"/><path d="M7 4.700c-1.500-.8-3 0-3 1.300"/><rect x="6.500" y="6" width="7.500" height="5" rx="1"/><path d="M11.500 11v1.500l-2-1.500"/></g></svg>
<svg style="left:1419px;top:188.8px;" width="12" height="14" viewBox="0 0 12 14"><g fill="none" stroke="#5a5d6b" stroke-width="1.100"><ellipse cx="6" cy="3" rx="5" ry="2.200"/><path d="M1 3v8c0 1.200 2.200 2.200 5 2.200s5-1 5-2.200V3M1 7c0 1.200 2.200 2.200 5 2.200s5-1 5-2.200"/></g></svg>
<svg style="left:1419px;top:219.7px;" width="13" height="13" viewBox="0 0 13 13"><g fill="none" stroke="#5a5d6b" stroke-width="1.100"><path d="M.8 7l4-4 2.500 2L11.500 1"/><path d="M3 12.500V9.500M6.500 12.500V7.500M10 12.500V6"/></g></svg>
<div style="left:1414.5px;top:244.5px;width:21.5px;height:22px;background:#dfe1e5;border-radius:4px;"></div>
<svg style="left:1418.5px;top:250px;" width="14" height="12" viewBox="0 0 14 12"><g fill="none" stroke="#5a5d6b" stroke-width="1.100"><path d="M7 10.500H2A1.200 1.200 0 0 1 .8 9.300V1.800A1.200 1.200 0 0 1 2 .6h9.500a1.200 1.200 0 0 1 1.200 1.200V6M.8 3.800h12M5 3.800V10.500M9 3.800V6.500"/><ellipse cx="11" cy="9.800" rx="2.600" ry="1.700"/></g><circle cx="11" cy="9.800" r=".8" fill="#5a5d6b"/></svg>
<div style="left:1416.5px;top:274.5px;width:17px;height:1px;background:#dfe1e5;"></div>
<span class="t s" style="top:287.0px;font-size:10px;line-height:13px;color:#5a5d6b;left:1418.8px;letter-spacing:0.513px;">(x)</span>
<div style="left:31px;top:676.3px;width:1378px;height:1px;background:#ebecf0;"></div>
<div style="left:31px;top:677px;width:1378px;height:255px;background:#f7f8fa;"></div>
<div style="left:31px;top:706px;width:1378px;height:27px;background:#f4f6f9;"></div>
<div style="left:4px;top:696.5px;width:22px;height:21.5px;background:#dfe1e5;border-radius:4px;"></div>
<svg style="left:8px;top:700.5px;" width="14" height="14" viewBox="0 0 14 14"><g fill="none" stroke="#5a5d6b" stroke-width="1.100"><ellipse cx="6.500" cy="8" rx="3.300" ry="4.200"/><path d="M4.500 4.500a2 2 0 0 1 4 0M3.200 7H.8M3.200 10H.8M9.800 7h2.400M9.800 10h2.400M3.800 5L2 3.200M9.200 5L11 3.200"/></g></svg>
<div style="left:17.5px;top:700px;width:4.5px;height:4.5px;background:#57a55f;border-radius:50%;"></div>
<svg style="left:10px;top:730.5px;" width="11" height="13" viewBox="0 0 11 13"><path d="M1 1.200v10.600l9-5.300z" fill="none" stroke="#5a5d6b" stroke-width="1.100" stroke-linejoin="round"/></svg>
<svg style="left:7.5px;top:759.5px;" width="15" height="15" viewBox="0.500 0 15 16"><g fill="none" stroke="#5a5d6b" stroke-width="1.200" stroke-linejoin="round"><path d="M7.900 1.200C5.300 1.200 5.200 2.300 5.200 2.900V4.500H8M5.200 4.500H3.900C2.700 4.500 2 5.500 2 7s.7 2.600 1.900 2.600H5V8.300c0-1 .7-1.700 1.700-1.700h2.700c.9 0 1.600-.7 1.600-1.600V2.900c0-.6-.5-1.700-3.100-1.700z"/><path d="M8.100 14.800c2.600 0 2.700-1.100 2.700-1.700V11.500H8M10.800 11.500h1.300c1.200 0 1.900-1 1.900-2.500s-.7-2.600-1.900-2.600H11"/><path d="M5.200 11.500v1.600c0 .6.300 1.700 2.900 1.700"/></g></svg>
<svg style="left:8px;top:790px;" width="14" height="14" viewBox="0 0 14 14"><g fill="none" stroke="#5a5d6b" stroke-width="1.100"><path d="M7 .8l5.500 3v5M7 .8L1.500 3.800v6.500L6 12.800M1.500 3.800L7 6.800l5.500-3M7 6.800v3"/><circle cx="10" cy="10.500" r="2.600"/><path d="M9 10.500l.8.800 1.400-1.500"/></g></svg>
<svg style="left:8px;top:820.5px;" width="14" height="14" viewBox="0 0 14 14"><g fill="none" stroke="#5a5d6b" stroke-width="1.100"><path d="M7 .8l5.500 3.100v6.200L7 13.200 1.500 10.100V3.900z" stroke-linejoin="round"/><path d="M5.500 4.500v5l4-2.500z" stroke-linejoin="round"/></g></svg>
<svg style="left:8.5px;top:851px;" width="13" height="12" viewBox="0 0 13 12"><g fill="none" stroke="#5a5d6b" stroke-width="1.100"><rect x=".6" y=".6" width="11.800" height="10.800" rx="1.500"/><path d="M3 3.500l2.500 2.300L3 8M6.500 8.500h3.500"/></g></svg>
<svg style="left:8px;top:880.5px;" width="14" height="14" viewBox="0 0 14 14"><g fill="none" stroke="#5a5d6b" stroke-width="1.100"><circle cx="7" cy="7" r="6"/><path d="M7 3.500v4.200M7 9.500v1.200"/></g></svg>
<svg style="left:9px;top:910px;" width="12" height="14" viewBox="0 0 12 14"><g fill="none" stroke="#5a5d6b" stroke-width="1.100"><circle cx="2.800" cy="2.800" r="1.800"/><circle cx="9.200" cy="4.500" r="1.800"/><path d="M2.800 4.600V13.500M9.200 6.300c0 2.800-6.400 1.700-6.400 4.700"/></g></svg>
<span class="t s b" style="top:685.5px;font-size:9.8px;line-height:13px;color:#27282e;left:40px;font-weight:700;"><i class=j style="width:28.22px;font-size:8.1px;letter-spacing:-1.05px">デバッグ</i></span>
<svg style="left:90.0px;top:686.0px;opacity:0.55" width="10.94" height="10.94" viewBox="2 1 12 14" preserveAspectRatio="none"><path d="M7.9 1C5 1 5.200 2.200 5.200 2.200v1.400h2.800v.4H3.900S2 3.700 2 6.700s1.600 2.900 1.600 2.900h1V8.200s0-1.600 1.600-1.600h2.800s1.500 0 1.500-1.500V2.600S10.800 1 7.900 1z" fill="#3b7bd0"/><path d="M8.100 15c2.900 0 2.700-1.200 2.700-1.200v-1.400H8v-.4h4.100s1.900.2 1.900-2.800-1.600-2.900-1.600-2.900h-1v1.400s0 1.600-1.600 1.600H7s-1.500 0-1.500 1.500v2.500S5.200 15 8.100 15z" fill="#f4b830"/></svg>
<div style="left:98.0px;top:685.5px;width:4px;height:4px;background:#8fcf97;border-radius:50%;"></div>
<span class="t s" style="top:685.5px;font-size:9.8px;line-height:13px;color:#3b3d47;left:104px;letter-spacing:-0.712px;">code30_010_index_basic</span>
<svg style="left:209.5px;top:689.0px;" width="6" height="6" viewBox="0 0 6 6"><path d="M.5.500l5 5M5.5.5l-5 5" stroke="#a0a3ad" stroke-width=".9"/></svg>
<svg style="left:232.0px;top:686.0px;opacity:0.55" width="10.94" height="10.94" viewBox="2 1 12 14" preserveAspectRatio="none"><path d="M7.9 1C5 1 5.200 2.200 5.200 2.200v1.400h2.800v.4H3.900S2 3.700 2 6.700s1.600 2.900 1.600 2.900h1V8.200s0-1.600 1.600-1.600h2.800s1.500 0 1.500-1.500V2.600S10.800 1 7.900 1z" fill="#3b7bd0"/><path d="M8.100 15c2.900 0 2.700-1.200 2.700-1.200v-1.400H8v-.4h4.100s1.900.2 1.900-2.800-1.600-2.900-1.600-2.900h-1v1.400s0 1.600-1.600 1.600H7s-1.500 0-1.500 1.500v2.500S5.200 15 8.100 15z" fill="#f4b830"/></svg>
<div style="left:240.0px;top:685.5px;width:4px;height:4px;background:#8fcf97;border-radius:50%;"></div>
<span class="t s" style="top:685.5px;font-size:9.8px;line-height:13px;color:#3b3d47;left:247px;letter-spacing:-0.743px;">code30_030_set_index</span>
<svg style="left:342.5px;top:689.0px;" width="6" height="6" viewBox="0 0 6 6"><path d="M.5.500l5 5M5.5.5l-5 5" stroke="#a0a3ad" stroke-width=".9"/></svg>
<svg style="left:366.0px;top:686.0px;opacity:0.9" width="10.94" height="10.94" viewBox="2 1 12 14" preserveAspectRatio="none"><path d="M7.9 1C5 1 5.200 2.200 5.200 2.200v1.400h2.800v.4H3.900S2 3.700 2 6.700s1.600 2.900 1.600 2.900h1V8.200s0-1.600 1.600-1.600h2.800s1.500 0 1.500-1.500V2.600S10.800 1 7.900 1z" fill="#3b7bd0"/><path d="M8.100 15c2.900 0 2.700-1.200 2.700-1.200v-1.400H8v-.4h4.100s1.900.2 1.900-2.800-1.600-2.900-1.600-2.900h-1v1.400s0 1.600-1.600 1.600H7s-1.500 0-1.500 1.500v2.500S5.200 15 8.100 15z" fill="#f4b830"/></svg>
<div style="left:374.0px;top:685.5px;width:4px;height:4px;background:#6cbf75;border-radius:50%;"></div>
<span class="t s" style="top:685.5px;font-size:9.8px;line-height:13px;color:#3b3d47;left:380px;letter-spacing:-0.73px;">code30_120_series_add_const</span>
<svg style="left:505.5px;top:689.0px;" width="6" height="6" viewBox="0 0 6 6"><path d="M.5.500l5 5M5.5.5l-5 5" stroke="#a0a3ad" stroke-width=".9"/></svg>
<div style="left:355.5px;top:703px;width:163.5px;height:2.5px;background:#a3a6af;border-radius:1.200px;"></div>
<div style="left:1372.8px;top:687.8px;width:1.4px;height:1.4px;background:#6c707e;border-radius:50%;"></div>
<div style="left:1372.8px;top:691.3px;width:1.4px;height:1.4px;background:#6c707e;border-radius:50%;"></div>
<div style="left:1372.8px;top:694.8px;width:1.4px;height:1.4px;background:#6c707e;border-radius:50%;"></div>
<div style="left:1389px;top:691.5px;width:9px;height:1px;background:#6c707e;"></div>
<svg style="left:40px;top:713.5px;" width="12.5" height="13" viewBox="0 0 12.500 13"><g fill="none" stroke="#4f9e57" stroke-width="1.100"><path d="M6 11.500A5 5 0 1 1 10.500 5"/><path d="M8 2l2.700 3-3.400 1"/><circle cx="9.500" cy="10" r="1.800"/><path d="M7.200 8.800l.8.500M11.800 8.800l-.8.500M7.200 11.500l.8-.5M11.800 11.500l-.8-.5"/></g></svg>
<div style="left:60.5px;top:715px;width:9.5px;height:9.5px;background:none;border:1.200px solid #d9515d;border-radius:2px;box-sizing:border-box;"></div>
<div style="left:77px;top:713px;width:1px;height:14px;background:#e3e4e8;"></div>
<svg style="left:84.5px;top:714.5px;" width="12" height="11" viewBox="0 0 12 11"><g fill="none" stroke="#4f9e57" stroke-width="1.100"><rect x=".6" y=".8" width="2.200" height="9.400" rx=".8"/><path d="M5.300 1.100v8.800l6-4.400z" stroke-linejoin="round"/></g></svg>
<svg style="left:105.5px;top:715px;" width="8" height="10" viewBox="0 0 8 10"><g fill="none" stroke="#c2c5cd" stroke-width="1"><rect x=".5" y=".5" width="2.200" height="9" rx=".8"/><rect x="5" y=".5" width="2.200" height="9" rx=".8"/></g></svg>
<svg style="left:124px;top:715.5px;" width="11" height="9" viewBox="0 0 11 9"><g fill="none" stroke="#6c707e" stroke-width="1"><path d="M.8 5.500C2.500 1.500 7 1 9.500 4.500"/><path d="M10 1.500v3.300H6.800"/><path d="M1.500 8.300h8"/></g></svg>
<svg style="left:143.5px;top:714.5px;" width="10" height="11" viewBox="0 0 10 11"><g fill="none" stroke="#6c707e" stroke-width="1"><path d="M5 .5v7M2 4.800l3 3 3-3M.8 10.300h8.400"/></g></svg>
<svg style="left:162.5px;top:714.5px;" width="10" height="11" viewBox="0 0 10 11"><g fill="none" stroke="#3574f0" stroke-width="1.100"><path d="M5 .5v7M2 4.800l3 3 3-3M.8 10.300h8.400"/></g></svg>
<svg style="left:182.5px;top:714.5px;" width="10" height="11" viewBox="0 0 10 11"><g fill="none" stroke="#6c707e" stroke-width="1"><path d="M5 8V1M2 3.800l3-3 3 3M.8 10.300h8.400"/></g></svg>
<div style="left:199px;top:713px;width:1px;height:14px;background:#e3e4e8;"></div>
<svg style="left:205.5px;top:714.5px;" width="13" height="11" viewBox="0 0 13 11"><g fill="none" stroke="#d9515d" stroke-width="1.100"><circle cx="4.500" cy="6.300" r="3.800"/><circle cx="8.500" cy="4.500" r="3.800"/></g></svg>
<svg style="left:225.5px;top:714px;" width="12" height="12" viewBox="0 0 12 12"><g fill="none" stroke="#d9515d" stroke-width="1.100"><circle cx="6" cy="6" r="4.300"/><path d="M1.500 10.500l9-9"/></g></svg>
<div style="left:250.3px;top:715.8px;width:1.4px;height:1.4px;background:#6c707e;border-radius:50%;"></div>
<div style="left:250.3px;top:719.3px;width:1.4px;height:1.4px;background:#6c707e;border-radius:50%;"></div>
<div style="left:250.3px;top:722.8px;width:1.4px;height:1.4px;background:#6c707e;border-radius:50%;"></div>
<span class="t s" style="top:714.5px;font-size:9.2px;line-height:12px;color:#27282e;left:280px;"><i class=j style="width:48.94px;font-size:8px;letter-spacing:-1px">スレッドと変数</i></span>
<div style="left:270.5px;top:730.5px;width:69px;height:2.5px;background:#a3a6af;border-radius:1.200px;"></div>
<span class="t s" style="top:714.5px;font-size:9.2px;line-height:12px;color:#27282e;left:348.5px;"><i class=j style="width:34.04px;font-size:7.8px;letter-spacing:-1px">コンソール</i></span>
<div style="left:343.5px;top:721px;width:4.5px;height:4.5px;background:#e08f3a;border-radius:50%;"></div>
<svg style="left:1396.5px;top:715.5px;" width="10" height="9" viewBox="0 0 10 9"><g fill="none" stroke="#6c707e" stroke-width=".9"><rect x=".5" y=".5" width="9" height="8" rx="1.200"/><path d="M3.800.5v8M3.800 4.500h5.700"/></g></svg>
<div style="left:31px;top:733px;width:1378px;height:24px;background:#fff;"></div>
<div style="left:160px;top:733px;width:1px;height:199px;background:#ebecf0;"></div>
<div style="left:39.5px;top:740px;width:10.5px;height:10.5px;background:#e06c1f;border-radius:50%;"></div>
<span class="t s" style="top:739.5px;font-size:9.6px;line-height:12px;color:#27282e;left:54px;letter-spacing:-0.373px;">MainThread</span>
<svg style="left:143.5px;top:743.5px;" width="7" height="4.5" viewBox="0 0 7 4.500"><path d="M.7.700l2.800 2.800L6.300.7" fill="none" stroke="#818594" stroke-width=".9"/></svg>
<span class="t m" style="top:739.5px;font-size:8.9px;line-height:12px;color:#a1a4ad;left:169px;"><i class=j style="width:8.81px">式</i> (Enter) <i class=j style="width:88.11px;letter-spacing:-.09px">の評価またはウォッチ</i> (Ctrl+Shift+Enter) <i class=j style="width:26.43px;letter-spacing:-.09px">の追加</i></span>
<svg style="left:1367px;top:739.5px;" width="10" height="12" viewBox="0 0 10 12"><g fill="none" stroke="#c2c5cd" stroke-width=".9"><path d="M5 .5v6M1 4h8"/><circle cx="3" cy="9.500" r="1.600"/><circle cx="7.500" cy="9.500" r="1.600"/></g></svg>
<svg style="left:1392.5px;top:743.5px;" width="7" height="4.5" viewBox="0 0 7 4.500"><path d="M.7.700l2.800 2.800L6.300.7" fill="none" stroke="#6c707e" stroke-width=".9"/></svg>
<div style="left:37px;top:761.5px;width:123px;height:17px;background:#dfe1e5;border-radius:3px 0 0 3px;"></div>
<div style="left:43.5px;top:766px;width:8px;height:8px;background:none;border:1px solid #6c707e;border-radius:2px;box-sizing:border-box;"></div>
<div style="left:58px;top:762px;width:102px;height:17px;overflow:hidden"><span class="t s" style="left:0;top:2px;font-size:9.600px;line-height:13px;color:#27282e;letter-spacing:-0.603px">&lt;module&gt;, code30_120_series_add_const.py</span></div>
<svg style="left:174px;top:767.0px;" width="4.5" height="7" viewBox="0 0 4.500 7"><path d="M.7.500l3 3-3 3" stroke="#818594" fill="none" stroke-width=".9"/></svg>
<div style="left:187.5px;top:765.2px;width:8.6px;height:3.3px;background:#fcf3d0;border:0.800px solid #d0ad50;box-sizing:border-box;border-radius:1.200px;"></div>
<div style="left:187.5px;top:768.8px;width:8.6px;height:3.3px;background:#fcf3d0;border:0.800px solid #d0ad50;box-sizing:border-box;border-radius:1.200px;"></div>
<div style="left:187.5px;top:772.4px;width:8.6px;height:3.3px;background:#fcf3d0;border:0.800px solid #d0ad50;box-sizing:border-box;border-radius:1.200px;"></div>
<span class="t s" style="left:200px;top:764.0px;font-size:9.400px;line-height:13px;letter-spacing:-0.185px"><span style="color:#3d6fb8">csv_path</span><span style="color:#27282e"> = </span><span style="color:#a1a4ad">{WindowsPath} </span><span style="color:#27282e">WindowsPath('D:/projects/lessons/pd_plt/lessons/30_step3/code/data/climate.csv')</span></span>
<svg style="left:174px;top:785.0px;" width="4.5" height="7" viewBox="0 0 4.500 7"><path d="M.7.500l3 3-3 3" stroke="#818594" fill="none" stroke-width=".9"/></svg>
<div style="left:187.5px;top:783.2px;width:8.6px;height:3.3px;background:#fcf3d0;border:0.800px solid #d0ad50;box-sizing:border-box;border-radius:1.200px;"></div>
<div style="left:187.5px;top:786.8px;width:8.6px;height:3.3px;background:#fcf3d0;border:0.800px solid #d0ad50;box-sizing:border-box;border-radius:1.200px;"></div>
<div style="left:187.5px;top:790.4px;width:8.6px;height:3.3px;background:#fcf3d0;border:0.800px solid #d0ad50;box-sizing:border-box;border-radius:1.200px;"></div>
<span class="t s" style="left:200px;top:782.0px;font-size:9.400px;line-height:13px;letter-spacing:-0.185px"><span style="color:#3d6fb8">data_dir</span><span style="color:#27282e"> = </span><span style="color:#a1a4ad">{WindowsPath} </span><span style="color:#27282e">WindowsPath('D:/projects/lessons/pd_plt/lessons/30_step3/code/data')</span></span>
<svg style="left:174px;top:803.0px;" width="4.5" height="7" viewBox="0 0 4.500 7"><path d="M.7.500l3 3-3 3" stroke="#818594" fill="none" stroke-width=".9"/></svg>
<div style="left:187.5px;top:801.2px;width:8.6px;height:3.3px;background:#fcf3d0;border:0.800px solid #d0ad50;box-sizing:border-box;border-radius:1.200px;"></div>
<div style="left:187.5px;top:804.8px;width:8.6px;height:3.3px;background:#fcf3d0;border:0.800px solid #d0ad50;box-sizing:border-box;border-radius:1.200px;"></div>
<div style="left:187.5px;top:808.4px;width:8.6px;height:3.3px;background:#fcf3d0;border:0.800px solid #d0ad50;box-sizing:border-box;border-radius:1.200px;"></div>
<span class="t s" style="left:200px;top:800.0px;font-size:9.400px;line-height:13px;letter-spacing:-0.262px"><span style="color:#3d6fb8">df</span><span style="color:#27282e"> = </span><span style="color:#a1a4ad">{DataFrame} </span></span>
<span class="t s" style="left:270px;top:800.0px;font-size:9.400px;line-height:13px;letter-spacing:0.012px"><span style="color:#27282e">['<i class=j style="width:18.24px;letter-spacing:-.28px">都市</i>', '<i class=j style="width:9.12px">月</i>', '<i class=j style="width:27.35px;letter-spacing:-.28px">降水量</i>', '<i class=j style="width:36.47px;letter-spacing:-.28px">最高気温</i>', '<i class=j style="width:36.47px;letter-spacing:-.28px">平均気温</i>', '<i class=j style="width:36.47px;letter-spacing:-.28px">最低気温</i>', '<i class=j style="width:18.24px;letter-spacing:-.28px">大陸</i>'] </span></span>
<span class="t s" style="left:517px;top:800.0px;font-size:9.400px;line-height:13px;letter-spacing:-0.3px"><span style="color:#27282e">[0 TYO  1   50    10    5     1  <i class=j style="width:37.6px;font-size:8.6px;letter-spacing:-1.08px">アジア大陸</i>] [1 SIN  1  250    30   27    24  <i class=j style="width:37.6px;font-size:8.6px;letter-spacing:-1.08px">アジア大陸</i>] [2 RUH  1   10    21   14     8  <i class=j style="width:37.6px;font-size:8.6px;letter-spacing:-1.08px">アジア大陸</i>] </span></span>
<span class="t s" style="left:977.5px;top:800.0px;font-size:9.400px;line-height:13px;letter-spacing:-0.435px"><span style="color:#3b6fb6">...DataFrame <i class=j style="width:36.19px;font-size:8.3px;letter-spacing:-1.06px">として表示</i></span></span>
<svg style="left:174px;top:821.0px;" width="4.5" height="7" viewBox="0 0 4.500 7"><path d="M.7.500l3 3-3 3" stroke="#818594" fill="none" stroke-width=".9"/></svg>
<div style="left:187.5px;top:819.2px;width:8.6px;height:3.3px;background:#fcf3d0;border:0.800px solid #d0ad50;box-sizing:border-box;border-radius:1.200px;"></div>
<div style="left:187.5px;top:822.8px;width:8.6px;height:3.3px;background:#fcf3d0;border:0.800px solid #d0ad50;box-sizing:border-box;border-radius:1.200px;"></div>
<div style="left:187.5px;top:826.4px;width:8.6px;height:3.3px;background:#fcf3d0;border:0.800px solid #d0ad50;box-sizing:border-box;border-radius:1.200px;"></div>
<span class="t s" style="left:200px;top:818.0px;font-size:9.400px;line-height:13px;letter-spacing:-0.267px"><span style="color:#3d6fb8">df_tokyo</span><span style="color:#27282e"> = </span><span style="color:#a1a4ad">{DataFrame} </span></span>
<span class="t s" style="left:296px;top:818.0px;font-size:9.400px;line-height:13px;letter-spacing:0.009px"><span style="color:#27282e">['<i class=j style="width:18.24px;letter-spacing:-.28px">都市</i>', '<i class=j style="width:9.12px">月</i>', '<i class=j style="width:27.35px;letter-spacing:-.28px">降水量</i>', '<i class=j style="width:36.47px;letter-spacing:-.28px">最高気温</i>', '<i class=j style="width:36.47px;letter-spacing:-.28px">平均気温</i>', '<i class=j style="width:36.47px;letter-spacing:-.28px">最低気温</i>', '<i class=j style="width:9.12px">国</i>'] </span></span>
<span class="t s" style="left:533.8px;top:818.0px;font-size:9.400px;line-height:13px;letter-spacing:-0.278px"><span style="color:#27282e">[0  TYO  1   50    10    5     1  <i class=j style="width:16.17px;font-size:9px;letter-spacing:-.9px">日本</i>] [5  TYO  2   60    11    6     2  <i class=j style="width:16.17px;font-size:9px;letter-spacing:-.9px">日本</i>] [10 TYO  3  100    14    9     5  <i class=j style="width:16.17px;font-size:9px;letter-spacing:-.9px">日本</i>] </span></span>
<span class="t s" style="left:935.6px;top:818.0px;font-size:9.400px;line-height:13px;letter-spacing:-0.442px"><span style="color:#3b6fb6">...DataFrame <i class=j style="width:36.19px;font-size:8.3px;letter-spacing:-1.06px">として表示</i></span></span>
<svg style="left:174px;top:839.0px;" width="4.5" height="7" viewBox="0 0 4.500 7"><path d="M.7.500l3 3-3 3" stroke="#818594" fill="none" stroke-width=".9"/></svg>
<div style="left:187.3px;top:837.7px;width:4.3px;height:4.4px;background:none;border:0.900px solid #6d89c4;box-sizing:border-box;border-radius:.5px;"></div>
<div style="left:187.3px;top:842.9px;width:4.3px;height:4.4px;background:none;border:0.900px solid #6d89c4;box-sizing:border-box;border-radius:.5px;"></div>
<div style="left:192.5px;top:837.7px;width:4.3px;height:4.4px;background:none;border:0.900px solid #6d89c4;box-sizing:border-box;border-radius:.5px;"></div>
<div style="left:192.5px;top:842.9px;width:4.3px;height:4.4px;background:none;border:0.900px solid #6d89c4;box-sizing:border-box;border-radius:.5px;"></div>
<span class="t s" style="top:836.5px;font-size:9.4px;line-height:12px;color:#27282e;left:200px;"><i class=j style="width:36.47px;letter-spacing:-.28px">特殊変数</i></span>
<div style="left:31px;top:908px;width:74.5px;height:6.5px;background:#d9dade;"></div>
<span class="t s" style="top:919.7px;font-size:8.6px;line-height:11px;color:#a1a4ad;left:37px;letter-spacing:-0.089px;">Ctrl+Alt+<i class=j style="width:8.17px;font-size:8.2px">上</i> <i class=j style="width:24.51px;letter-spacing:-.43px">および</i> Ctrl+Alt+...</span>
<svg style="left:148.75px;top:921.25px;" width="5.5" height="5.5" viewBox="0 0 5.5 5.5"><path d="M.5.500l4.500 4.500M5.0.5l-4.500 4.500" stroke="#a1a4ad" stroke-width=".9"/></svg>
<svg style="left:349.5px;top:733.5px;" width="9" height="15" viewBox="0 0 9 15"><path d="M.7.800v11.200l2.700-2.500 1.900 4.300 1.700-.8-1.900-4.100h3.400z" fill="#fff" stroke="#222" stroke-width=".9" stroke-linejoin="round"/></svg>
<div style="left:0px;top:932px;width:1440px;height:22px;background:#f7f8fa;"></div>
<div style="left:0px;top:932px;width:1440px;height:1px;background:#ebecf0;"></div>
<div style="left:10px;top:939.5px;width:6.5px;height:7px;background:none;border:1px solid #6a9be8;border-radius:2px;box-sizing:border-box;"></div>
<span class="t s" style="top:937.5px;font-size:9.5px;line-height:12px;color:#7a7e8a;left:19.5px;letter-spacing:-0.147px;">pd_plt</span>
<svg style="left:50.5px;top:940.5px;" width="4" height="6" viewBox="0 0 4 6"><path d="M.6.500l2.600 2.500L.6 5.500" stroke="#9da0a8" fill="none" stroke-width=".8"/></svg>
<span class="t s" style="top:937.5px;font-size:9.5px;line-height:12px;color:#7a7e8a;left:62.5px;letter-spacing:-0.53px;">lessons</span>
<svg style="left:97.5px;top:940.5px;" width="4" height="6" viewBox="0 0 4 6"><path d="M.6.500l2.600 2.500L.6 5.500" stroke="#9da0a8" fill="none" stroke-width=".8"/></svg>
<span class="t s" style="top:937.5px;font-size:9.5px;line-height:12px;color:#7a7e8a;left:109px;letter-spacing:-0.636px;">30_step3</span>
<svg style="left:149.5px;top:940.5px;" width="4" height="6" viewBox="0 0 4 6"><path d="M.6.500l2.600 2.500L.6 5.500" stroke="#9da0a8" fill="none" stroke-width=".8"/></svg>
<span class="t s" style="top:937.5px;font-size:9.5px;line-height:12px;color:#7a7e8a;left:160.5px;letter-spacing:-0.275px;">code</span>
<svg style="left:186.5px;top:940.5px;" width="4" height="6" viewBox="0 0 4 6"><path d="M.6.500l2.600 2.500L.6 5.500" stroke="#9da0a8" fill="none" stroke-width=".8"/></svg>
<svg style="left:198.2px;top:937.8px;opacity:1" width="10.5" height="10.5" viewBox="2 1 12 14" preserveAspectRatio="none"><path d="M7.9 1C5 1 5.200 2.200 5.200 2.200v1.400h2.800v.4H3.900S2 3.700 2 6.700s1.600 2.900 1.600 2.900h1V8.200s0-1.600 1.600-1.600h2.800s1.500 0 1.500-1.500V2.600S10.800 1 7.900 1z" fill="#3b7bd0"/><path d="M8.100 15c2.900 0 2.700-1.200 2.700-1.200v-1.400H8v-.4h4.100s1.900.2 1.900-2.800-1.600-2.900-1.600-2.900h-1v1.400s0 1.600-1.600 1.600H7s-1.500 0-1.500 1.500v2.500S5.200 15 8.100 15z" fill="#f4b830"/></svg>
<span class="t s" style="top:937.5px;font-size:9.5px;line-height:12px;color:#7a7e8a;left:213px;letter-spacing:-0.574px;">code30_120_series_add_const.py</span>
<span class="t s" style="top:938.0px;font-size:8.8px;line-height:11px;color:#8e919c;left:1168px;letter-spacing:-0.282px;">38:1</span>
<span class="t s" style="top:938.0px;font-size:8.8px;line-height:11px;color:#8e919c;left:1196px;letter-spacing:-0.995px;">CRLF</span>
<span class="t s" style="top:938.0px;font-size:8.8px;line-height:11px;color:#8e919c;left:1227.5px;letter-spacing:-0.286px;">UTF-8</span>
<svg style="left:1264px;top:938.5px;" width="10" height="11" viewBox="0 0 10 11"><g fill="none" stroke="#8e919c" stroke-width=".9"><path d="M5 10H2A1.200 1.200 0 0 1 .8 8.800V3.200A1.200 1.200 0 0 1 2 2h.8M6.500 2h.7A1.200 1.200 0 0 1 8.400 3.200V5"/><rect x="2.800" y=".6" width="3.700" height="2.400" rx=".8"/><circle cx="7.500" cy="8.300" r="1.900"/></g></svg>
<span class="t s" style="top:938.0px;font-size:8.800px;line-height:11px;color:#8e919c;left:1277.5px;">4</span>
<span class="t s" style="top:938.0px;font-size:8.8px;line-height:11px;color:#8e919c;left:1283px;"><i class=j style="width:23.23px;font-size:6.7px;letter-spacing:-.88px">スペース</i></span>
<span class="t s" style="top:938.0px;font-size:8.8px;line-height:11px;color:#8e919c;left:1323px;letter-spacing:0.012px;">Python 3.13 (pd_plt)</span>
<svg style="left:1417px;top:938.5px;" width="10" height="10" viewBox="0 0 10 10"><g fill="none" stroke="#8e919c" stroke-width=".9"><rect x=".6" y="4.500" width="6.500" height="5" rx="1"/><path d="M5.300 4.500V2.800a2 2 0 0 1 4 0v.8"/></g></svg>
<div style="left:568.5px;top:910.5px;width:303px;height:38px;background:#fff;box-shadow:0 0 3px rgba(0,0,0,.22);border-radius:1px;"></div>
<div style="left:576.5px;top:925px;width:1px;height:9.5px;background:#b8bbc2;"></div>
<div style="left:579.5px;top:925px;width:1px;height:9.5px;background:#b8bbc2;"></div>
<span class="t s" style="top:924.0px;font-size:9.3px;line-height:12px;color:#30333a;left:588px;letter-spacing:-0.183px;">meet.google.com <i class=j style="width:91.51px;font-size:8.8px;letter-spacing:-1.17px">が画面を共有しています。</i></span>
<div style="left:758px;top:915px;width:71.5px;height:29px;background:#0b57d0;border-radius:14.500px;"></div>
<span class="t s b" style="top:924.0px;font-size:9.3px;line-height:12px;color:#fff;left:770.5px;font-weight:700;"><i class=j style="width:45.1px;letter-spacing:-.28px">共有を停止</i></span>
<span class="t s" style="top:924.5px;font-size:9px;line-height:12px;color:#0b57d0;left:837.5px;"><i class=j style="width:26.46px;letter-spacing:-.18px">非表示</i></span>
<div style="left:837.5px;top:935.5px;width:26.5px;height:0.8px;background:#0b57d0;"></div>
<div style="left:0px;top:954px;width:1440px;height:36px;background:linear-gradient(90deg,#dde8f3 0,#d9e2f2 300px,#d6dff2 700px,#d8e3f2 1050px,#dcebf4 1440px);"></div>
<div style="left:0px;top:954px;width:1440px;height:1px;background:#c9d2e0;"></div>
<svg style="left:13px;top:961.5px;" width="20" height="19" viewBox="0 0 20 19"><circle cx="13.500" cy="6" r="4.300" fill="#f59b23"/><path d="M5 17.500a3.800 3.800 0 0 1-.3-7.600A5 5 0 0 1 14 9.200a3.800 3.800 0 0 1 1 8.300z" fill="#d5e3f8" stroke="#a9c0e8" stroke-width=".8"/></svg>
<span class="t s" style="top:960.5px;font-size:8.8px;line-height:11px;color:#1f2228;left:38px;letter-spacing:-0.541px;">16°C</span>
<span class="t s" style="top:972.0px;font-size:8.3px;line-height:11px;color:#1f2228;left:38px;"><i class=j style="width:48.22px;font-size:7.9px;letter-spacing:-1.01px">くもりのち晴れ</i></span>
<div style="left:462.5px;top:963.5px;width:8.2px;height:8.2px;background:linear-gradient(135deg,#35b6f2,#1278d4);border-radius:.8px;"></div>
<div style="left:471.5px;top:963.5px;width:8.2px;height:8.2px;background:linear-gradient(135deg,#35b6f2,#1278d4);border-radius:.8px;"></div>
<div style="left:462.5px;top:972.5px;width:8.2px;height:8.2px;background:linear-gradient(135deg,#35b6f2,#1278d4);border-radius:.8px;"></div>
<div style="left:471.5px;top:972.5px;width:8.2px;height:8.2px;background:linear-gradient(135deg,#35b6f2,#1278d4);border-radius:.8px;"></div>
<div style="left:490.5px;top:960.5px;width:163px;height:22.5px;background:#eef3fb;border-radius:11.500px;box-shadow:0 0 1px rgba(0,0,0,.15);"></div>
<svg style="left:498.5px;top:966px;" width="11" height="11" viewBox="0 0 11 11"><g fill="none" stroke="#1f2228" stroke-width="1.400"><circle cx="4.500" cy="4.500" r="3.500"/><path d="M7.200 7.200l3 3"/></g></svg>
<span class="t s" style="top:966.0px;font-size:9.5px;line-height:12px;color:#6f737c;left:517.5px;"><i class=j style="width:19.95px;letter-spacing:.47px">検索</i></span>
<div style="left:619px;top:965.5px;width:8px;height:13px;background:#3f63a8;border-radius:1px;"></div>
<svg style="left:628.5px;top:962.5px;" width="18" height="19" viewBox="0 0 18 19"><ellipse cx="9" cy="6" rx="3.800" ry="4.500" fill="#c9a28c"/><path d="M5.500 3.500c.5-3 6.500-3 7 0 .3 1-1 .5-3.500.5s-3.800.5-3.500-.5z" fill="#4a4038"/><path d="M6 8c0 5 1.500 8 3 8s3-3 3-8c-1 1.500-5 1.500-6 0z" fill="#8a8a8a"/><path d="M1.500 19c0-5 3-7 5-7.500L9 16l2.500-4.500c2 .5 5 2.500 5 7.500z" fill="#b9b5ad"/></svg>
<div style="left:669.5px;top:963.3px;width:13px;height:11.5px;background:linear-gradient(135deg,#fdfdfe,#e4e7ee);border-radius:1.500px;"></div>
<div style="left:664.2px;top:968.6px;width:12.3px;height:11.1px;background:#26272b;border-radius:1.500px;"></div>
<div style="left:669.5px;top:968.6px;width:7px;height:6.2px;background:#bfc1c7;"></div>
<div style="left:696.5px;top:962.7px;width:18.6px;height:17.8px;background:#d4242b;border-radius:1.500px;"></div>
<svg style="left:699.5px;top:965.5px;" width="13" height="13" viewBox="0 0 13 13"><g fill="none" stroke="#fff" stroke-width="1.200"><path d="M4 1.500h5.500l2 2v8H4z"/><circle cx="4" cy="6.500" r="2.300" fill="#d4242b"/><path d="M7 9.500l1.500 1.500 2.500-3"/></g></svg>
<div style="left:725.5px;top:957.5px;width:27px;height:28.5px;background:#eaf0fa;border-radius:3px;"></div>
<div style="left:729.5px;top:962.4px;width:18.6px;height:18.6px;background:linear-gradient(135deg,#0bc2f0 0,#21d789 50%,#f6f04c 100%);border-radius:2px;"></div>
<div style="left:732.5px;top:965.5px;width:12.5px;height:12.5px;background:#0c0c0c;"></div>
<span class="t s b" style="top:966.6px;font-size:5.5px;line-height:6px;color:#fff;left:734px;font-weight:700;">PC</span>
<div style="left:734.2px;top:975px;width:4.5px;height:1px;background:#fff;"></div>
<div style="left:733.2px;top:984px;width:10.6px;height:2.2px;background:#2f6fe0;border-radius:1px;"></div>
<svg style="left:762.2px;top:963.4px;" width="18" height="18" viewBox="-10 -10 20 20"><circle r="10" fill="#e33b2e"/><path d="M0 0L-8.660 -5A10 10 0 0 0 -5 8.660z" fill="#2ba24c"/><path d="M0 0L-8.660 -5 -5 8.660z" fill="#2ba24c"/><path d="M0 0L-5 8.660A10 10 0 0 0 10 0z" fill="#fbc116"/><path d="M0 0L10 0A10 10 0 0 0 -8.660 -5z" fill="#e33b2e"/><circle r="4.600" fill="#fff"/><circle r="3.700" fill="#3f7de6"/></svg>
<div style="left:773.3px;top:959.5px;width:11px;height:11px;background:#4aa3e8;border-radius:50%;border:1px solid #e8f0fb;box-sizing:border-box;"></div>
<svg style="left:775.5px;top:962.5px;" width="6.5" height="5" viewBox="0 0 6.500 5"><path d="M1.500 4.500a1.300 1.300 0 0 1 0-2.600A2 2 0 0 1 5.300 2.300a1.100 1.100 0 0 1 0 2.200z" fill="#fff"/></svg>
<div style="left:797.8px;top:965px;width:14.2px;height:13.5px;background:#121212;border-radius:3px;"></div>
<svg style="left:800.2px;top:967.5px;" width="9.5" height="8.5" viewBox="0 0 10 9"><path d="M1 2l4-1.500L9 2 5 8.500z" fill="#d8d8d8"/><path d="M1 2l4 1.200L9 2M5 3.200V8.500" stroke="#555" fill="none" stroke-width=".6"/></svg>
<div style="left:828px;top:965.5px;width:19.3px;height:14.2px;background:#f7c64a;border-radius:2px;"></div>
<div style="left:828px;top:964.2px;width:8px;height:4px;background:#e8a93a;border-radius:1.500px 1.500px 0 0;"></div>
<div style="left:832.5px;top:974.2px;width:10.5px;height:5.5px;background:#2f86e0;border-radius:1px;"></div>
<svg style="left:861px;top:963.4px;" width="18" height="18" viewBox="-10 -10 20 20"><circle r="10" fill="#e33b2e"/><path d="M0 0L-8.660 -5A10 10 0 0 0 -5 8.660z" fill="#2ba24c"/><path d="M0 0L-8.660 -5 -5 8.660z" fill="#2ba24c"/><path d="M0 0L-5 8.660A10 10 0 0 0 10 0z" fill="#fbc116"/><path d="M0 0L10 0A10 10 0 0 0 -8.660 -5z" fill="#e33b2e"/><circle r="4.600" fill="#fff"/><circle r="3.700" fill="#3f7de6"/></svg>
<div style="left:872px;top:960.5px;width:11px;height:11px;background:#f07a1c;border-radius:50%;"></div>
<span class="t s" style="top:962.0px;font-size:7.5px;line-height:8px;color:#fff;left:875.6px;">k</span>
<div style="left:898.5px;top:963.5px;width:13px;height:17px;background:#21a366;border-radius:1.500px;"></div>
<div style="left:905px;top:963.5px;width:6.5px;height:8.5px;background:#33c481;"></div>
<div style="left:905px;top:972px;width:6.5px;height:8.5px;background:#107c41;"></div>
<div style="left:894.2px;top:968.5px;width:9.5px;height:9.5px;background:#107c41;border-radius:1px;"></div>
<span class="t s b" style="top:969.2px;font-size:8px;line-height:8px;color:#fff;left:896.5px;font-weight:700;">x</span>
<div style="left:929.6px;top:963.5px;width:13px;height:17.5px;background:#f3f4f7;border-radius:1.500px;border:0.800px solid #b9bdc9;box-sizing:border-box;"></div>
<div style="left:932px;top:968.5px;width:7px;height:1px;background:#b4bbd0;"></div>
<div style="left:932px;top:971.5px;width:7px;height:1px;background:#b4bbd0;"></div>
<div style="left:932px;top:974.5px;width:7px;height:1px;background:#b4bbd0;"></div>
<svg style="left:934.5px;top:962px;" width="10" height="16" viewBox="0 0 10 16"><path d="M7.500.5L9.500 2 3.500 14 1.500 15.500 1.800 13z" fill="#f2a03d" stroke="#b86a1a" stroke-width=".5"/></svg>
<div style="left:960.6px;top:965.5px;width:18.6px;height:13px;background:#2b2e35;border-radius:2px;"></div>
<div style="left:960.6px;top:965.5px;width:18.6px;height:2.8px;background:#5b5f69;border-radius:2px 2px 0 0;"></div>
<svg style="left:963px;top:970px;" width="12" height="7" viewBox="0 0 12 7"><path d="M1 1l3 2.300L1 5.600M5.500 6h5" stroke="#fff" stroke-width="1.300" fill="none"/></svg>
<div style="left:769.4000000000001px;top:984.2px;width:4.6px;height:1.7px;background:#8a8f9a;border-radius:1px;"></div>
<div style="left:802.7px;top:984.2px;width:4.6px;height:1.7px;background:#8a8f9a;border-radius:1px;"></div>
<div style="left:835.5px;top:984.2px;width:4.6px;height:1.7px;background:#8a8f9a;border-radius:1px;"></div>
<div style="left:868.0px;top:984.2px;width:4.6px;height:1.7px;background:#8a8f9a;border-radius:1px;"></div>
<div style="left:900.7px;top:984.2px;width:4.6px;height:1.7px;background:#8a8f9a;border-radius:1px;"></div>
<div style="left:933.7px;top:984.2px;width:4.6px;height:1.7px;background:#8a8f9a;border-radius:1px;"></div>
<div style="left:967.0px;top:984.2px;width:4.6px;height:1.7px;background:#8a8f9a;border-radius:1px;"></div>
<svg style="left:1167.5px;top:968px;" width="10" height="6" viewBox="0 0 10 6"><path d="M1 5l4-4 4 4" fill="none" stroke="#1f2228" stroke-width="1.300"/></svg>
<svg style="left:1189px;top:966.5px;" width="14" height="10" viewBox="0 0 14 10"><path d="M4 9.300a3 3 0 0 1-.5-6A4 4 0 0 1 11 4a2.700 2.700 0 0 1 .2 5.300z" fill="#c9c9c9" stroke="#3a3a3a" stroke-width=".9"/></svg>
<svg style="left:1213.5px;top:966px;" width="13" height="12" viewBox="0 0 13 12"><path d="M3.300.5L6.500 2.600 3.300 4.700.2 2.600zM9.700.5l3.100 2.100-3.100 2.100L6.500 2.600zM3.300 4.700l3.200 2.100-3.200 2.100L.2 6.800zM9.700 4.700l3.100 2.100-3.100 2.100-3.200-2.100zM3.400 9.600l3.100-2 3.100 2-3.100 2z" fill="#111"/></svg>
<svg style="left:1240px;top:965.5px;" width="9" height="14" viewBox="0 0 9 14"><g fill="none" stroke="#2f6fe0" stroke-width="1.200"><rect x="2.800" y=".7" width="3.400" height="7.500" rx="1.700"/><path d="M.8 6.500a3.700 3.700 0 0 0 7.400 0M4.500 10.300V13"/></g></svg>
<span class="t r" style="top:965.5px;font-size:10.5px;line-height:14px;color:#b5b8c0;left:1264px;">A</span>
<div style="left:1290.5px;top:967px;width:10.5px;height:10.5px;background:#1f6fd6;border-radius:50%;"></div>
<div style="left:1298px;top:974.5px;width:3.8px;height:3.8px;background:#e04a3a;border-radius:50%;"></div>
<div style="left:1296px;top:976px;width:2.5px;height:2.5px;background:#f2c230;border-radius:50%;"></div>
<svg style="left:1318px;top:967px;" width="14" height="11" viewBox="0 0 14 11"><g fill="none" stroke="#1f2228" stroke-width="1.100"><path d="M.8 4A9 9 0 0 1 13.200 4M2.800 6.300a6 6 0 0 1 8.400 0M4.800 8.300a3.200 3.200 0 0 1 4.400 0"/></g><circle cx="7" cy="10" r="1" fill="#1f2228"/></svg>
<svg style="left:1336.5px;top:966.5px;" width="13" height="12" viewBox="0 0 13 12"><g fill="none" stroke="#1f2228" stroke-width="1"><path d="M.8 4.300h2L6 1.500v9L2.800 7.700h-2z" stroke-linejoin="round"/><path d="M8 4a3 3 0 0 1 0 4M9.800 2.300a5.500 5.500 0 0 1 0 7.400M11.500 1a7.500 7.500 0 0 1 0 10"/></g></svg>
<svg style="left:1354.5px;top:966.5px;" width="14" height="12" viewBox="0 0 14 12"><g fill="none" stroke="#1f2228" stroke-width="1.200"><rect x="1" y="2.500" width="10" height="6" rx="1.200"/><path d="M12 4.500v2"/><path d="M2.500 1.200l8 8.500"/></g><path d="M8.500 8.500h5l-2.500 3z" fill="#1f2228"/></svg>
<span class="t s" style="top:960.7px;font-size:8.8px;line-height:11px;color:#1f2228;left:1403.78px;">12:56</span>
<span class="t s" style="top:972.5px;font-size:8.8px;line-height:11px;color:#1f2228;left:1382.41px;">2025/11/08</span>
<svg style="left:1620.800px;top:479.400px" width="121" height="121" viewBox="-60.500 -60.500 121 121"><clipPath id="cc"><circle r="59.200"/></clipPath><circle r="59.200" fill="#2f9bd2"/><g clip-path="url(#cc)"><path d="M0.300 -31.300L-33.100 25.200H33.100z" fill="#fff"/><path d="M3.200 -31.300L35.700 -1.800V23.800L33.500 25z" fill="#fff"/><path d="M1.200 -31.300L34 24.800" stroke="#2f9bd2" stroke-width="1.500"/><g stroke="#fff" stroke-width="1.150" fill="none"><path d="M0.300 -30.800H-50.500" stroke-width="1.700"/><path d="M-6.500 -20.900L-53.150 -27.800"/><path d="M-11.400 -12.200L-55.100 -23"/><path d="M-16.900 -3.100L-56.650 -18.300"/><path d="M-21.650 5.700L-57.700 -13.800"/><path d="M-27.200 15L-58.600 -9.400"/><path d="M-32.700 24.500L-59 -6.400"/></g><circle cx="-42" cy="40.800" r="5" fill="#c33"/><circle cx="-41.200" cy="40" r="4.800" fill="#fff"/></g></svg>
<span class="t s" style="top:646.0px;font-size:18px;line-height:24px;color:#fff;left:1455.5px;"><i class=j style="width:72.0px">小川慶一</i></span>
</div>
</body></html>
